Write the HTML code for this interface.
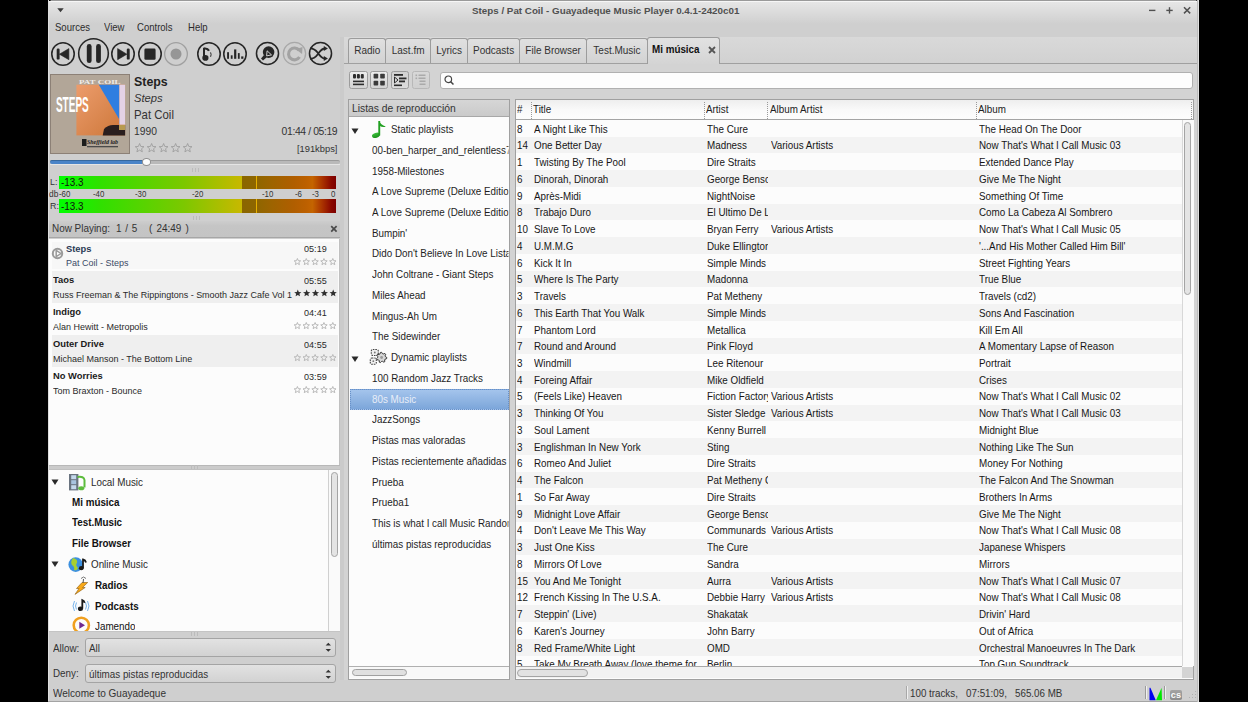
<!DOCTYPE html><html><head><meta charset='utf-8'><style>
html,body{margin:0;padding:0;width:1248px;height:702px;overflow:hidden;background:#000;font-family:"Liberation Sans", sans-serif;}
.t{position:absolute;white-space:nowrap;}
.b{position:absolute;box-sizing:border-box;}
svg{position:absolute;overflow:visible;}

</style></head><body>
<div class='b' style='left:48px;top:0px;width:1151px;height:702px;background:#cfcfcf;'></div>
<div class='b' style='left:48px;top:0px;width:1151px;height:37px;background:linear-gradient(#e8e8e8,#cfcfcf 24px,#cfcfcf);'></div>
<div class='b' style='left:48px;top:0px;width:1151px;height:1px;background:#9a9a9a;'></div>
<div class='b' style='left:49px;top:1px;width:1149px;height:1px;background:#f6f6f6;'></div>
<div class='b' style='left:48px;top:0px;width:3px;height:3px;background:radial-gradient(circle at 100% 100%, transparent 2.2px, #000 2.8px);'></div>
<div class='b' style='left:1196px;top:0px;width:3px;height:3px;background:radial-gradient(circle at 0% 100%, transparent 2.2px, #000 2.8px);'></div>
<div class='b' style='left:48px;top:0px;width:1px;height:702px;background:#dedede;'></div>
<div class='b' style='left:48px;top:701px;width:1151px;height:1px;background:#a4a4a4;'></div>
<div class='b' style='left:1197px;top:0px;width:1px;height:702px;background:#bcbcbc;'></div>
<div class='b' style='left:1198px;top:0px;width:1px;height:702px;background:#e0e0e0;'></div>
<div class='t' style='left:472px;top:4.60px;font-size:9.80px;line-height:12px;color:#505050;font-weight:bold;font-style:normal;'>Steps / Pat Coil - Guayadeque Music Player 0.4.1-2420c01</div>
<svg style='left:56.5px;top:8.3px' width='8' height='6'><path d='M0.3 0.3 L6.7 0.3 L3.5 4.2 Z' fill='#3a3a3a'/></svg>
<svg style='left:1148px;top:5px' width='50' height='12'><rect x='1' y='4.7' width='6.4' height='1.4' fill='#505050'/><rect x='18.3' y='4.7' width='6.4' height='1.4' fill='#505050'/><rect x='20.8' y='2.2' width='1.4' height='6.4' fill='#505050'/><path d='M36 2.2 L42.2 8.4 M42.2 2.2 L36 8.4' stroke='#505050' stroke-width='1.5'/></svg>
<div class='t' style='left:55px;top:22.34px;font-size:9.99px;line-height:12px;color:#2c2c2c;font-weight:normal;font-style:normal;transform:scaleX(0.955);transform-origin:0 0;'>Sources</div>
<div class='t' style='left:103.5px;top:22.34px;font-size:9.99px;line-height:12px;color:#2c2c2c;font-weight:normal;font-style:normal;transform:scaleX(0.955);transform-origin:0 0;'>View</div>
<div class='t' style='left:137px;top:22.34px;font-size:9.99px;line-height:12px;color:#2c2c2c;font-weight:normal;font-style:normal;transform:scaleX(0.955);transform-origin:0 0;'>Controls</div>
<div class='t' style='left:187.5px;top:22.34px;font-size:9.99px;line-height:12px;color:#2c2c2c;font-weight:normal;font-style:normal;transform:scaleX(0.955);transform-origin:0 0;'>Help</div>
<svg style='left:48.1px;top:39.0px' width='30' height='30' viewBox='-15.0 -15.0 30 30'><circle cx='0' cy='0' r='11.225' fill='none' stroke='#262626' stroke-width='1.55'/><rect x='-6.3' y='-5.4' width='2.9' height='11' rx='1.2' fill='#262626'/><path d='M-3.6 0.2 L5.9 -5.4 L5.9 5.7 Z' fill='#262626' stroke='#262626' stroke-width='0.6' stroke-linejoin='round'/></svg>
<svg style='left:74.8px;top:35.4px' width='37' height='37' viewBox='-18.5 -18.5 37 37'><circle cx='0' cy='0' r='14.825' fill='none' stroke='#262626' stroke-width='1.55'/><rect x='-6.7' y='-9.4' width='4.8' height='19' rx='2.4' fill='#262626'/><rect x='2.6' y='-9.4' width='4.8' height='19' rx='2.4' fill='#262626'/></svg>
<svg style='left:108.4px;top:39.0px' width='30' height='30' viewBox='-15.0 -15.0 30 30'><circle cx='0' cy='0' r='11.225' fill='none' stroke='#262626' stroke-width='1.55'/><rect x='3.8' y='-5.4' width='2.9' height='11' rx='1.2' fill='#262626'/><path d='M3.9 0.2 L-5.4 -5.4 L-5.4 5.7 Z' fill='#262626' stroke='#262626' stroke-width='0.6' stroke-linejoin='round'/></svg>
<svg style='left:134.9px;top:38.9px' width='30' height='30' viewBox='-15.0 -15.0 30 30'><circle cx='0' cy='0' r='11.225' fill='none' stroke='#262626' stroke-width='1.55'/><rect x='-5.6' y='-5.4' width='11.2' height='11.2' rx='1.3' fill='#262626'/></svg>
<svg style='left:161.1px;top:38.9px' width='30' height='30' viewBox='-15.0 -15.0 30 30'><circle cx='0' cy='0' r='11.35' fill='none' stroke='#a0a0a0' stroke-width='1.3'/><circle cx='0' cy='0' r='5.5' fill='#969696'/></svg>
<svg style='left:193.9px;top:38.9px' width='30' height='30' viewBox='-15.0 -15.0 30 30'><circle cx='0' cy='0' r='11.225' fill='none' stroke='#262626' stroke-width='1.55'/><ellipse cx='-3.6' cy='3.9' rx='3.1' ry='2.8' fill='#262626'/><rect x='-6' y='-6.2' width='2' height='10' fill='#262626'/><path d='M-5 -5.4 Q-1.5 -6 0 -3.2' stroke='#262626' stroke-width='2.2' fill='none'/><path d='M1.6 -1.6 Q2.6 0.6 1.6 2.8' stroke='#262626' stroke-width='1' fill='none'/></svg>
<svg style='left:220.1px;top:38.9px' width='30' height='30' viewBox='-15.0 -15.0 30 30'><circle cx='0' cy='0' r='11.225' fill='none' stroke='#262626' stroke-width='1.55'/><rect x='-7.9' y='-1.8' width='1.9' height='6.6' fill='#262626'/><rect x='-4.2' y='1.3' width='1.8' height='3.5' fill='#262626'/><rect x='-0.9' y='-4.6' width='2.2' height='9.4' fill='#262626'/><rect x='2.9' y='-0.9' width='1.8' height='5.7' fill='#262626'/><rect x='6.2' y='2.4' width='2.2' height='2.4' fill='#262626'/></svg>
<svg style='left:253.39999999999998px;top:39.4px' width='29' height='29' viewBox='-14.5 -14.5 29 29'><circle cx='0' cy='0' r='11.025' fill='none' stroke='#262626' stroke-width='1.55'/><circle cx='1.1' cy='-1.4' r='5.8' fill='#262626'/><path d='M-3.5 1.5 L-1 4 L-4.5 7 L-6.5 5 Z' fill='#262626'/><path d='M-6.5 6.5 L-7.5 7.5' stroke='#666' stroke-width='1'/><path d='M-0.4 -2.7 L4 1.4 L-0.9 2.4 Z' fill='none' stroke='#e0e0e0' stroke-width='0.9'/></svg>
<svg style='left:279.6px;top:39.4px' width='29' height='29' viewBox='-14.5 -14.5 29 29'><circle cx='0' cy='0' r='11.15' fill='none' stroke='#a8a8a8' stroke-width='1.3'/><path d='M4.6 -3.2 A5.9 5.9 0 1 0 5 3.5' stroke='#a2a2a2' stroke-width='3.1' fill='none'/><path d='M1.2 -4.2 L8 -6.4 L7.6 0.4 Z' fill='#a2a2a2'/></svg>
<svg style='left:305.8px;top:39.4px' width='29' height='29' viewBox='-14.5 -14.5 29 29'><circle cx='0' cy='0' r='11.025' fill='none' stroke='#262626' stroke-width='1.55'/><path d='M-10.5 -5.2 C-5 -5.2 -3.5 -1.5 -2.2 0 C-0.9 1.5 1 5 4.5 5 M-10.5 5.2 C-5 5.2 -3.5 1.5 -2.2 0 C-0.9 -1.5 1 -5 4.5 -5' stroke='#262626' stroke-width='1.85' fill='none'/><path d='M3.3 -7.6 L7.4 -5 L3.3 -2.4 Z M3.3 2.4 L7.4 5 L3.3 7.6 Z' fill='#262626'/></svg>
<svg style='left:50px;top:74px' width='80' height='80' viewBox='0 0 80 80'>
<defs><linearGradient id='og' x1='0' y1='0' x2='1' y2='1'><stop offset='0' stop-color='#ec9c6c'/><stop offset='1' stop-color='#cc7638'/></linearGradient></defs>
<rect x='0' y='0' width='80' height='80' fill='#b2a698'/>
<rect x='0.5' y='0.5' width='79' height='79' fill='none' stroke='#8c8076' stroke-width='1'/>
<rect x='26.4' y='10.7' width='48.7' height='50.7' fill='url(#og)'/>
<path d='M48.8 10.7 L69.4 10.7 L69.4 50 L72 50 Z' fill='#2f7ee0'/>
<rect x='69.4' y='10.7' width='5.7' height='40' fill='#e4d2e6'/>
<path d='M52.7 61.4 L54 55 Q58 51 63 51 L70 51 L75.1 51 L75.1 61.4 Z' fill='#2a1e1e'/>
<rect x='69' y='51' width='6.1' height='5' fill='#b89a50'/>
<text x='0' y='0' font-family='Liberation Sans' font-weight='bold' font-size='16' fill='#fff' transform='translate(5.9,37.8) scale(0.7,1.36)' textLength='47' lengthAdjust='spacingAndGlyphs'>STEPS</text>
<text x='29' y='9.5' font-family='Liberation Serif' font-weight='bold' font-size='5.6' fill='#f0ece8' textLength='41.6' lengthAdjust='spacingAndGlyphs'>PAT COIL</text>
<rect x='32' y='65' width='4.5' height='7' fill='#1c1c1c'/>
<text x='37' y='70' font-family='Liberation Serif' font-style='italic' font-weight='bold' font-size='6' fill='#1c1c1c' textLength='31' lengthAdjust='spacingAndGlyphs'>Sheffield lab</text>
<rect x='37' y='72' width='31' height='1.3' fill='#4a4a4a'/>
</svg>
<div class='t' style='left:133.6px;top:73.70px;font-size:12.98px;line-height:16px;color:#222;font-weight:bold;font-style:normal;transform:scaleX(0.955);transform-origin:0 0;'>Steps</div>
<div class='t' style='left:133.8px;top:91.23px;font-size:11.74px;line-height:14px;color:#333;font-weight:normal;font-style:italic;transform:scaleX(0.955);transform-origin:0 0;'>Steps</div>
<div class='t' style='left:133.6px;top:107.86px;font-size:11.95px;line-height:14px;color:#333;font-weight:normal;font-style:normal;transform:scaleX(0.955);transform-origin:0 0;'>Pat Coil</div>
<div class='t' style='left:133.6px;top:124.75px;font-size:10.81px;line-height:13px;color:#333;font-weight:normal;font-style:normal;transform:scaleX(0.955);transform-origin:0 0;'>1990</div>
<div class='t' style='right:910.5px;top:124.52px;font-size:10.92px;line-height:13px;color:#333;font-weight:normal;font-style:normal;text-align:right;transform:scaleX(0.955);transform-origin:100% 0;letter-spacing:-0.42px;'>01:44 / 05:19</div>
<div class='t' style='right:910.5px;top:142.61px;font-size:9.79px;line-height:12px;color:#333;font-weight:normal;font-style:normal;text-align:right;transform:scaleX(0.955);transform-origin:100% 0;'>[191kbps]</div>
<svg style='left:135.2px;top:143.1px' width='62' height='11.2'><polygon transform='translate(4.60,5.10)' points='0.00,-4.60 1.22,-1.67 4.37,-1.42 1.97,0.64 2.70,3.72 0.00,2.07 -2.70,3.72 -1.97,0.64 -4.37,-1.42 -1.22,-1.67' fill='none' stroke='#9c9c9c' stroke-width='0.85' stroke-linejoin='round'/><polygon transform='translate(16.60,5.10)' points='0.00,-4.60 1.22,-1.67 4.37,-1.42 1.97,0.64 2.70,3.72 0.00,2.07 -2.70,3.72 -1.97,0.64 -4.37,-1.42 -1.22,-1.67' fill='none' stroke='#9c9c9c' stroke-width='0.85' stroke-linejoin='round'/><polygon transform='translate(28.60,5.10)' points='0.00,-4.60 1.22,-1.67 4.37,-1.42 1.97,0.64 2.70,3.72 0.00,2.07 -2.70,3.72 -1.97,0.64 -4.37,-1.42 -1.22,-1.67' fill='none' stroke='#9c9c9c' stroke-width='0.85' stroke-linejoin='round'/><polygon transform='translate(40.60,5.10)' points='0.00,-4.60 1.22,-1.67 4.37,-1.42 1.97,0.64 2.70,3.72 0.00,2.07 -2.70,3.72 -1.97,0.64 -4.37,-1.42 -1.22,-1.67' fill='none' stroke='#9c9c9c' stroke-width='0.85' stroke-linejoin='round'/><polygon transform='translate(52.60,5.10)' points='0.00,-4.60 1.22,-1.67 4.37,-1.42 1.97,0.64 2.70,3.72 0.00,2.07 -2.70,3.72 -1.97,0.64 -4.37,-1.42 -1.22,-1.67' fill='none' stroke='#9c9c9c' stroke-width='0.85' stroke-linejoin='round'/></svg>
<div class='b' style='left:50px;top:160px;width:290px;height:3.8px;background:#b9b9b9;border-radius:2px;border-top:1px solid #9a9a9a;'></div>
<div class='b' style='left:50px;top:163.8px;width:290px;height:1px;background:#e4e4e4;'></div>
<div class='b' style='left:50px;top:160px;width:96px;height:3.8px;background:#4a84c8;border-radius:2px;border-top:1px solid #36689e;'></div>
<div class='b' style='left:141.6px;top:157.6px;width:9.8px;height:8.2px;background:#fcfcfc;border-radius:50%;border:1px solid #8e8e8e;'></div>
<svg style='left:190.5px;top:167.8px' width='10' height='4'><rect x='1' y='0' width='1' height='4' fill='#bcbcbc'/><rect x='4' y='0' width='1' height='4' fill='#bcbcbc'/><rect x='7' y='0' width='1' height='4' fill='#bcbcbc'/></svg>
<svg style='left:191.5px;top:216px' width='10' height='4'><rect x='1' y='0' width='1' height='4' fill='#bcbcbc'/><rect x='4' y='0' width='1' height='4' fill='#bcbcbc'/><rect x='7' y='0' width='1' height='4' fill='#bcbcbc'/></svg>
<div class='b' style='left:58.8px;top:175.8px;width:277.2px;height:13.1px;background:linear-gradient(90deg,#00ff00 0%,#30e000 15%,#7cc800 45%,#c8b800 66%,#d0a000 72%,#c07000 85%,#c86000 92%,#901000 97%,#700000 100%);'></div>
<div class='b' style='left:241.5px;top:175.8px;width:94.5px;height:13.1px;background:linear-gradient(90deg,#8a6600 0%,#8e6600 15%,#9c6400 30%,#b05e00 55%,#bc6000 68%,#c46400 75%,#a83000 86%,#8a0800 95%,#7c0000 100%);'></div>
<div class='b' style='left:256.4px;top:175.8px;width:1.1px;height:13.1px;background:#e6b000;'></div>
<div class='t' style='left:50.3px;top:177.39px;font-size:9.27px;line-height:11px;color:#333;font-weight:normal;font-style:normal;transform:scaleX(0.955);transform-origin:0 0;'>L:</div>
<div class='t' style='left:60.5px;top:177.13px;font-size:10.30px;line-height:12px;color:#111;font-weight:normal;font-style:normal;transform:scaleX(0.955);transform-origin:0 0;'>-13.3</div>
<div class='b' style='left:58.8px;top:199.2px;width:277.2px;height:13.5px;background:linear-gradient(90deg,#00ff00 0%,#30e000 15%,#7cc800 45%,#c8b800 66%,#d0a000 72%,#c07000 85%,#c86000 92%,#901000 97%,#700000 100%);'></div>
<div class='b' style='left:241.5px;top:199.2px;width:94.5px;height:13.5px;background:linear-gradient(90deg,#8a6600 0%,#8e6600 15%,#9c6400 30%,#b05e00 55%,#bc6000 68%,#c46400 75%,#a83000 86%,#8a0800 95%,#7c0000 100%);'></div>
<div class='b' style='left:256.4px;top:199.2px;width:1.1px;height:13.5px;background:#e6b000;'></div>
<div class='t' style='left:50.3px;top:200.79px;font-size:9.27px;line-height:11px;color:#333;font-weight:normal;font-style:normal;transform:scaleX(0.955);transform-origin:0 0;'>R:</div>
<div class='t' style='left:60.5px;top:200.53px;font-size:10.30px;line-height:12px;color:#111;font-weight:normal;font-style:normal;transform:scaleX(0.955);transform-origin:0 0;'>-13.3</div>
<div class='t' style='left:48.8px;top:189.27px;font-size:8.76px;line-height:11px;color:#333;font-weight:normal;font-style:normal;transform:scaleX(0.955);transform-origin:0 0;'>db</div>
<div class='t' style='left:59.2px;top:190.14px;font-size:8.24px;line-height:10px;color:#333;font-weight:normal;font-style:normal;transform:scaleX(0.955);transform-origin:0 0;'>-60</div>
<div class='t' style='left:92.5px;top:190.14px;font-size:8.24px;line-height:10px;color:#333;font-weight:normal;font-style:normal;transform:scaleX(0.955);transform-origin:0 0;'>-40</div>
<div class='t' style='left:134.5px;top:190.14px;font-size:8.24px;line-height:10px;color:#333;font-weight:normal;font-style:normal;transform:scaleX(0.955);transform-origin:0 0;'>-30</div>
<div class='t' style='left:192px;top:190.14px;font-size:8.24px;line-height:10px;color:#333;font-weight:normal;font-style:normal;transform:scaleX(0.955);transform-origin:0 0;'>-20</div>
<div class='t' style='left:262px;top:190.14px;font-size:8.24px;line-height:10px;color:#333;font-weight:normal;font-style:normal;transform:scaleX(0.955);transform-origin:0 0;'>-10</div>
<div class='t' style='left:295px;top:190.14px;font-size:8.24px;line-height:10px;color:#333;font-weight:normal;font-style:normal;transform:scaleX(0.955);transform-origin:0 0;'>-6</div>
<div class='t' style='left:312.4px;top:190.14px;font-size:8.24px;line-height:10px;color:#333;font-weight:normal;font-style:normal;transform:scaleX(0.955);transform-origin:0 0;'>-3</div>
<div class='t' style='left:331px;top:190.14px;font-size:8.24px;line-height:10px;color:#333;font-weight:normal;font-style:normal;transform:scaleX(0.955);transform-origin:0 0;'>0</div>
<div class='b' style='left:48.5px;top:221px;width:291.5px;height:17.2px;background:linear-gradient(#cdcdcd,#c5c5c5 30%,#c4c4c4);border-bottom:1.4px solid #a6a6a6;'></div>
<div class='t' style='left:51.8px;top:222.70px;font-size:10.40px;line-height:12px;color:#333;font-weight:normal;font-style:normal;transform:scaleX(0.955);transform-origin:0 0;'>Now Playing:</div>
<div class='t' style='left:115.6px;top:222.70px;font-size:10.40px;line-height:12px;color:#333;font-weight:normal;font-style:normal;transform:scaleX(0.955);transform-origin:0 0;word-spacing:1px;'>1 / 5</div>
<div class='t' style='left:149px;top:222.70px;font-size:10.40px;line-height:12px;color:#333;font-weight:normal;font-style:normal;transform:scaleX(0.955);transform-origin:0 0;word-spacing:1.5px;'>( 24:49 )</div>
<svg style='left:329.5px;top:225px' width='8' height='8'><path d='M1.2 1.2 L6.6 6.6 M6.6 1.2 L1.2 6.6' stroke='#4a4a4a' stroke-width='1.7'/></svg>
<div class='b' style='left:49px;top:238.5px;width:291px;height:226px;background:#fcfcfc;border-right:1px solid #c0c0c0;'></div>
<div class='b' style='left:51.5px;top:241.5px;width:286.8px;height:27px;background:#f7f7f7;'></div>
<div class='t' style='left:65.6px;top:243.01px;font-size:9.79px;line-height:12px;color:#2a3a55;font-weight:bold;font-style:normal;transform:scaleX(0.955);transform-origin:0 0;'>Steps</div>
<div class='t' style='left:65.6px;top:257.23px;font-size:9.42px;line-height:11px;color:#3a4a66;font-weight:normal;font-style:normal;transform:scaleX(0.955);transform-origin:0 0;'>Pat Coil - Steps</div>
<div class='t' style='right:921.6px;top:242.72px;font-size:9.48px;line-height:11px;color:#2a2a2a;font-weight:normal;font-style:normal;text-align:right;transform:scaleX(0.955);transform-origin:100% 0;'>05:19</div>
<svg style='left:294.2px;top:257.6px' width='46.25' height='8.8'><polygon transform='translate(3.40,3.90)' points='0.00,-3.40 0.90,-1.24 3.23,-1.05 1.46,0.47 2.00,2.75 0.00,1.53 -2.00,2.75 -1.46,0.47 -3.23,-1.05 -0.90,-1.24' fill='none' stroke='#b0b0b0' stroke-width='0.85' stroke-linejoin='round'/><polygon transform='translate(12.25,3.90)' points='0.00,-3.40 0.90,-1.24 3.23,-1.05 1.46,0.47 2.00,2.75 0.00,1.53 -2.00,2.75 -1.46,0.47 -3.23,-1.05 -0.90,-1.24' fill='none' stroke='#b0b0b0' stroke-width='0.85' stroke-linejoin='round'/><polygon transform='translate(21.10,3.90)' points='0.00,-3.40 0.90,-1.24 3.23,-1.05 1.46,0.47 2.00,2.75 0.00,1.53 -2.00,2.75 -1.46,0.47 -3.23,-1.05 -0.90,-1.24' fill='none' stroke='#b0b0b0' stroke-width='0.85' stroke-linejoin='round'/><polygon transform='translate(29.95,3.90)' points='0.00,-3.40 0.90,-1.24 3.23,-1.05 1.46,0.47 2.00,2.75 0.00,1.53 -2.00,2.75 -1.46,0.47 -3.23,-1.05 -0.90,-1.24' fill='none' stroke='#b0b0b0' stroke-width='0.85' stroke-linejoin='round'/><polygon transform='translate(38.80,3.90)' points='0.00,-3.40 0.90,-1.24 3.23,-1.05 1.46,0.47 2.00,2.75 0.00,1.53 -2.00,2.75 -1.46,0.47 -3.23,-1.05 -0.90,-1.24' fill='none' stroke='#b0b0b0' stroke-width='0.85' stroke-linejoin='round'/></svg>
<svg style='left:52px;top:247.5px' width='12' height='12'><circle cx='5.5' cy='5.5' r='4.7' fill='none' stroke='#9a9a9a' stroke-width='2'/><path d='M4.2 2.3 L9 5.5 L4.2 8.7 Z' fill='#fafafa' stroke='#9a9a9a' stroke-width='1.5' stroke-linejoin='round'/></svg>
<div class='b' style='left:51.5px;top:271px;width:286.8px;height:32px;background:#efefef;'></div>
<div class='t' style='left:52.8px;top:274.11px;font-size:9.79px;line-height:12px;color:#1a1a1a;font-weight:bold;font-style:normal;transform:scaleX(0.955);transform-origin:0 0;'>Taos</div>
<div class='t' style='left:52.8px;top:289.23px;font-size:9.42px;line-height:11px;color:#2a2a2a;font-weight:normal;font-style:normal;transform:scaleX(0.955);transform-origin:0 0;'>Russ Freeman &amp; The Rippingtons - Smooth Jazz Cafe Vol 1</div>
<div class='t' style='right:921.6px;top:274.72px;font-size:9.48px;line-height:11px;color:#2a2a2a;font-weight:normal;font-style:normal;text-align:right;transform:scaleX(0.955);transform-origin:100% 0;'>05:55</div>
<svg style='left:293.8px;top:289.2px' width='46.25' height='9.6'><polygon transform='translate(3.80,4.30)' points='0.00,-3.80 1.01,-1.38 3.61,-1.17 1.63,0.53 2.23,3.07 0.00,1.71 -2.23,3.07 -1.63,0.53 -3.61,-1.17 -1.01,-1.38' fill='#303030'/><polygon transform='translate(12.65,4.30)' points='0.00,-3.80 1.01,-1.38 3.61,-1.17 1.63,0.53 2.23,3.07 0.00,1.71 -2.23,3.07 -1.63,0.53 -3.61,-1.17 -1.01,-1.38' fill='#303030'/><polygon transform='translate(21.50,4.30)' points='0.00,-3.80 1.01,-1.38 3.61,-1.17 1.63,0.53 2.23,3.07 0.00,1.71 -2.23,3.07 -1.63,0.53 -3.61,-1.17 -1.01,-1.38' fill='#303030'/><polygon transform='translate(30.35,4.30)' points='0.00,-3.80 1.01,-1.38 3.61,-1.17 1.63,0.53 2.23,3.07 0.00,1.71 -2.23,3.07 -1.63,0.53 -3.61,-1.17 -1.01,-1.38' fill='#303030'/><polygon transform='translate(39.20,4.30)' points='0.00,-3.80 1.01,-1.38 3.61,-1.17 1.63,0.53 2.23,3.07 0.00,1.71 -2.23,3.07 -1.63,0.53 -3.61,-1.17 -1.01,-1.38' fill='#303030'/></svg>
<div class='t' style='left:52.8px;top:306.11px;font-size:9.79px;line-height:12px;color:#1a1a1a;font-weight:bold;font-style:normal;transform:scaleX(0.955);transform-origin:0 0;'>Indigo</div>
<div class='t' style='left:52.8px;top:321.23px;font-size:9.42px;line-height:11px;color:#2a2a2a;font-weight:normal;font-style:normal;transform:scaleX(0.955);transform-origin:0 0;'>Alan Hewitt - Metropolis</div>
<div class='t' style='right:921.6px;top:306.72px;font-size:9.48px;line-height:11px;color:#2a2a2a;font-weight:normal;font-style:normal;text-align:right;transform:scaleX(0.955);transform-origin:100% 0;'>04:41</div>
<svg style='left:294.2px;top:321.6px' width='46.25' height='8.8'><polygon transform='translate(3.40,3.90)' points='0.00,-3.40 0.90,-1.24 3.23,-1.05 1.46,0.47 2.00,2.75 0.00,1.53 -2.00,2.75 -1.46,0.47 -3.23,-1.05 -0.90,-1.24' fill='none' stroke='#b0b0b0' stroke-width='0.85' stroke-linejoin='round'/><polygon transform='translate(12.25,3.90)' points='0.00,-3.40 0.90,-1.24 3.23,-1.05 1.46,0.47 2.00,2.75 0.00,1.53 -2.00,2.75 -1.46,0.47 -3.23,-1.05 -0.90,-1.24' fill='none' stroke='#b0b0b0' stroke-width='0.85' stroke-linejoin='round'/><polygon transform='translate(21.10,3.90)' points='0.00,-3.40 0.90,-1.24 3.23,-1.05 1.46,0.47 2.00,2.75 0.00,1.53 -2.00,2.75 -1.46,0.47 -3.23,-1.05 -0.90,-1.24' fill='none' stroke='#b0b0b0' stroke-width='0.85' stroke-linejoin='round'/><polygon transform='translate(29.95,3.90)' points='0.00,-3.40 0.90,-1.24 3.23,-1.05 1.46,0.47 2.00,2.75 0.00,1.53 -2.00,2.75 -1.46,0.47 -3.23,-1.05 -0.90,-1.24' fill='none' stroke='#b0b0b0' stroke-width='0.85' stroke-linejoin='round'/><polygon transform='translate(38.80,3.90)' points='0.00,-3.40 0.90,-1.24 3.23,-1.05 1.46,0.47 2.00,2.75 0.00,1.53 -2.00,2.75 -1.46,0.47 -3.23,-1.05 -0.90,-1.24' fill='none' stroke='#b0b0b0' stroke-width='0.85' stroke-linejoin='round'/></svg>
<div class='b' style='left:51.5px;top:335px;width:286.8px;height:32px;background:#efefef;'></div>
<div class='t' style='left:52.8px;top:338.11px;font-size:9.79px;line-height:12px;color:#1a1a1a;font-weight:bold;font-style:normal;transform:scaleX(0.955);transform-origin:0 0;'>Outer Drive</div>
<div class='t' style='left:52.8px;top:353.23px;font-size:9.42px;line-height:11px;color:#2a2a2a;font-weight:normal;font-style:normal;transform:scaleX(0.955);transform-origin:0 0;'>Michael Manson - The Bottom Line</div>
<div class='t' style='right:921.6px;top:338.72px;font-size:9.48px;line-height:11px;color:#2a2a2a;font-weight:normal;font-style:normal;text-align:right;transform:scaleX(0.955);transform-origin:100% 0;'>04:55</div>
<svg style='left:294.2px;top:353.6px' width='46.25' height='8.8'><polygon transform='translate(3.40,3.90)' points='0.00,-3.40 0.90,-1.24 3.23,-1.05 1.46,0.47 2.00,2.75 0.00,1.53 -2.00,2.75 -1.46,0.47 -3.23,-1.05 -0.90,-1.24' fill='none' stroke='#b0b0b0' stroke-width='0.85' stroke-linejoin='round'/><polygon transform='translate(12.25,3.90)' points='0.00,-3.40 0.90,-1.24 3.23,-1.05 1.46,0.47 2.00,2.75 0.00,1.53 -2.00,2.75 -1.46,0.47 -3.23,-1.05 -0.90,-1.24' fill='none' stroke='#b0b0b0' stroke-width='0.85' stroke-linejoin='round'/><polygon transform='translate(21.10,3.90)' points='0.00,-3.40 0.90,-1.24 3.23,-1.05 1.46,0.47 2.00,2.75 0.00,1.53 -2.00,2.75 -1.46,0.47 -3.23,-1.05 -0.90,-1.24' fill='none' stroke='#b0b0b0' stroke-width='0.85' stroke-linejoin='round'/><polygon transform='translate(29.95,3.90)' points='0.00,-3.40 0.90,-1.24 3.23,-1.05 1.46,0.47 2.00,2.75 0.00,1.53 -2.00,2.75 -1.46,0.47 -3.23,-1.05 -0.90,-1.24' fill='none' stroke='#b0b0b0' stroke-width='0.85' stroke-linejoin='round'/><polygon transform='translate(38.80,3.90)' points='0.00,-3.40 0.90,-1.24 3.23,-1.05 1.46,0.47 2.00,2.75 0.00,1.53 -2.00,2.75 -1.46,0.47 -3.23,-1.05 -0.90,-1.24' fill='none' stroke='#b0b0b0' stroke-width='0.85' stroke-linejoin='round'/></svg>
<div class='t' style='left:52.8px;top:370.11px;font-size:9.79px;line-height:12px;color:#1a1a1a;font-weight:bold;font-style:normal;transform:scaleX(0.955);transform-origin:0 0;'>No Worries</div>
<div class='t' style='left:52.8px;top:385.23px;font-size:9.42px;line-height:11px;color:#2a2a2a;font-weight:normal;font-style:normal;transform:scaleX(0.955);transform-origin:0 0;'>Tom Braxton - Bounce</div>
<div class='t' style='right:921.6px;top:370.72px;font-size:9.48px;line-height:11px;color:#2a2a2a;font-weight:normal;font-style:normal;text-align:right;transform:scaleX(0.955);transform-origin:100% 0;'>03:59</div>
<svg style='left:294.2px;top:385.6px' width='46.25' height='8.8'><polygon transform='translate(3.40,3.90)' points='0.00,-3.40 0.90,-1.24 3.23,-1.05 1.46,0.47 2.00,2.75 0.00,1.53 -2.00,2.75 -1.46,0.47 -3.23,-1.05 -0.90,-1.24' fill='none' stroke='#b0b0b0' stroke-width='0.85' stroke-linejoin='round'/><polygon transform='translate(12.25,3.90)' points='0.00,-3.40 0.90,-1.24 3.23,-1.05 1.46,0.47 2.00,2.75 0.00,1.53 -2.00,2.75 -1.46,0.47 -3.23,-1.05 -0.90,-1.24' fill='none' stroke='#b0b0b0' stroke-width='0.85' stroke-linejoin='round'/><polygon transform='translate(21.10,3.90)' points='0.00,-3.40 0.90,-1.24 3.23,-1.05 1.46,0.47 2.00,2.75 0.00,1.53 -2.00,2.75 -1.46,0.47 -3.23,-1.05 -0.90,-1.24' fill='none' stroke='#b0b0b0' stroke-width='0.85' stroke-linejoin='round'/><polygon transform='translate(29.95,3.90)' points='0.00,-3.40 0.90,-1.24 3.23,-1.05 1.46,0.47 2.00,2.75 0.00,1.53 -2.00,2.75 -1.46,0.47 -3.23,-1.05 -0.90,-1.24' fill='none' stroke='#b0b0b0' stroke-width='0.85' stroke-linejoin='round'/><polygon transform='translate(38.80,3.90)' points='0.00,-3.40 0.90,-1.24 3.23,-1.05 1.46,0.47 2.00,2.75 0.00,1.53 -2.00,2.75 -1.46,0.47 -3.23,-1.05 -0.90,-1.24' fill='none' stroke='#b0b0b0' stroke-width='0.85' stroke-linejoin='round'/></svg>
<div class='b' style='left:48.5px;top:464.5px;width:292px;height:5px;background:#cbcbcb;border-top:1px solid #b8b8b8;border-bottom:1px solid #c0c0c0;'></div>
<svg style='left:190px;top:465px' width='10' height='4'><rect x='1' y='0' width='1' height='4' fill='#bcbcbc'/><rect x='4' y='0' width='1' height='4' fill='#bcbcbc'/><rect x='7' y='0' width='1' height='4' fill='#bcbcbc'/></svg>
<div class='b' style='left:49px;top:469.5px;width:291px;height:162px;background:#fcfcfc;border-right:1px solid #c0c0c0;'></div>
<div class='b' style='left:328.2px;top:469.5px;width:11.6px;height:161.5px;background:#fafafa;border-left:1px solid #d0d0d0;'></div>
<div class='b' style='left:331.2px;top:472px;width:7px;height:85px;background:#e4e4e4;border:1px solid #a4a4a4;border-radius:3.5px;'></div>
<svg style='left:50.5px;top:478.5px' width='9' height='7'><path d='M0.5 0.5 L7.5 0.5 L4 6 Z' fill='#2a2a2a'/></svg>
<svg style='left:68px;top:473px' width='20' height='19'>
<rect x='1' y='1' width='9.4' height='16.4' fill='#6a7480'/>
<rect x='3.2' y='2.2' width='5' height='4' fill='#c4d8ec'/><rect x='3.2' y='7.2' width='5' height='4' fill='#a8c4e0'/><rect x='3.2' y='12.2' width='5' height='4' fill='#c4d8ec'/>
<path d='M9.5 4 Q16 3 16.5 7 L16.5 14.5' stroke='#5cbc3c' stroke-width='2' fill='none'/><ellipse cx='13.3' cy='15.3' rx='3' ry='2' fill='#5cbc3c'/></svg>
<div class='t' style='left:90.9px;top:476.83px;font-size:10.30px;line-height:12px;color:#2a2a2a;font-weight:normal;font-style:normal;transform:scaleX(0.955);transform-origin:0 0;'>Local Music</div>
<div class='t' style='left:72.3px;top:496.73px;font-size:10.30px;line-height:12px;color:#111;font-weight:bold;font-style:normal;transform:scaleX(0.955);transform-origin:0 0;'>Mi música</div>
<div class='t' style='left:72.3px;top:517.45px;font-size:10.30px;line-height:12px;color:#111;font-weight:bold;font-style:normal;transform:scaleX(0.955);transform-origin:0 0;'>Test.Music</div>
<div class='t' style='left:72.3px;top:538.17px;font-size:10.30px;line-height:12px;color:#111;font-weight:bold;font-style:normal;transform:scaleX(0.955);transform-origin:0 0;'>File Browser</div>
<svg style='left:50.5px;top:561.4px' width='9' height='7'><path d='M0.5 0.5 L7.5 0.5 L4 6 Z' fill='#2a2a2a'/></svg>
<svg style='left:68px;top:556px' width='20' height='18'>
<circle cx='7.7' cy='8.6' r='7.3' fill='#3c90e0'/><path d='M5 2 Q10 3 9 7 Q7 9 10 12 Q9 15 6 14 Q7 11 4 9 Q2 6 5 2 Z' fill='#a8d030'/>
<ellipse cx='13.3' cy='12.2' rx='2.4' ry='2.1' fill='#1a1a1a'/><path d='M15 12 L15 3.5 Q17.5 4 18 6.5' stroke='#1a1a1a' stroke-width='1.8' fill='none'/></svg>
<div class='t' style='left:90.9px;top:559.43px;font-size:10.30px;line-height:12px;color:#2a2a2a;font-weight:normal;font-style:normal;transform:scaleX(0.955);transform-origin:0 0;'>Online Music</div>
<svg style='left:73px;top:575px' width='18' height='21'>
<path d='M9 7.5 L14.7 7.5 L9.5 12.5 L12.2 12.5 L2 19.4 L6 13.5 L3.5 13.5 Z' fill='#f8a818' stroke='#8a5a10' stroke-width='0.6'/>
<path d='M10 8 L10.5 4' stroke='#555' stroke-width='1'/><path d='M8 3.5 Q10.5 0.5 13 3.5' stroke='#777' stroke-width='1' fill='none'/></svg>
<div class='t' style='left:94.6px;top:580.23px;font-size:10.30px;line-height:12px;color:#111;font-weight:bold;font-style:normal;transform:scaleX(0.955);transform-origin:0 0;'>Radios</div>
<svg style='left:71px;top:598px' width='21' height='16'>
<path d='M3.5 3 Q0.5 8 3.5 13 M5.5 4.5 Q3.5 8 5.5 11.5 M16.5 3 Q19.5 8 16.5 13 M14.5 4.5 Q16.5 8 14.5 11.5' stroke='#78b4ec' stroke-width='1' fill='none'/>
<ellipse cx='9.5' cy='10.8' rx='2.6' ry='2.3' fill='#1a1a1a'/><path d='M11.3 10.5 L11.3 2 Q13.3 2.5 13.6 4.8' stroke='#1a1a1a' stroke-width='1.8' fill='none'/></svg>
<div class='t' style='left:94.6px;top:601.23px;font-size:10.30px;line-height:12px;color:#111;font-weight:bold;font-style:normal;transform:scaleX(0.955);transform-origin:0 0;'>Podcasts</div>
<svg style='left:71px;top:616px' width='21' height='16'>
<circle cx='10.3' cy='9.3' r='7.6' fill='none' stroke='#f0a020' stroke-width='2.6'/><path d='M8.3 5.8 L14 9.3 L8.3 12.8 Z' fill='#702890'/></svg>
<div class='t' style='left:94.6px;top:620.93px;font-size:10.30px;line-height:12px;color:#111;font-weight:normal;font-style:normal;transform:scaleX(0.955);transform-origin:0 0;height:13px;overflow:hidden;'>Jamendo</div>
<div class='b' style='left:48.5px;top:631px;width:292px;height:70px;background:#cfcfcf;border-top:1px solid #c4c4c4;'></div>
<svg style='left:190px;top:632px' width='10' height='4'><rect x='1' y='0' width='1' height='4' fill='#bcbcbc'/><rect x='4' y='0' width='1' height='4' fill='#bcbcbc'/><rect x='7' y='0' width='1' height='4' fill='#bcbcbc'/></svg>
<div class='t' style='left:52.9px;top:643.43px;font-size:10.30px;line-height:12px;color:#333;font-weight:normal;font-style:normal;transform:scaleX(0.955);transform-origin:0 0;'>Allow:</div>
<div class='t' style='left:52.9px;top:667.93px;font-size:10.30px;line-height:12px;color:#333;font-weight:normal;font-style:normal;transform:scaleX(0.955);transform-origin:0 0;'>Deny:</div>
<div class='b' style='left:84.7px;top:637.8px;width:251px;height:19.5px;background:linear-gradient(#e2e2e2,#d2d2d2);border:1px solid #a4a4a4;border-radius:3px;'></div>
<div class='t' style='left:88.6px;top:642.53px;font-size:10.30px;line-height:12px;color:#333;font-weight:normal;font-style:normal;transform:scaleX(0.955);transform-origin:0 0;'>All</div>
<svg style='left:324.5px;top:642.3px' width='7' height='11'><path d='M0.6 3.6 L3.3 0.8 L6 3.6 Z M0.6 7 L3.3 9.8 L6 7 Z' fill='#333'/></svg>
<div class='b' style='left:84.7px;top:664.2px;width:251px;height:18.4px;background:linear-gradient(#e2e2e2,#d2d2d2);border:1px solid #a4a4a4;border-radius:3px;'></div>
<div class='t' style='left:88.6px;top:668.93px;font-size:10.30px;line-height:12px;color:#333;font-weight:normal;font-style:normal;transform:scaleX(0.955);transform-origin:0 0;'>últimas pistas reproducidas</div>
<svg style='left:324.5px;top:668.7px' width='7' height='11'><path d='M0.6 3.6 L3.3 0.8 L6 3.6 Z M0.6 7 L3.3 9.8 L6 7 Z' fill='#333'/></svg>
<div class='t' style='left:52.6px;top:687.16px;font-size:10.51px;line-height:13px;color:#333;font-weight:normal;font-style:normal;transform:scaleX(0.955);transform-origin:0 0;'>Welcome to Guayadeque</div>
<div class='b' style='left:340px;top:37px;width:3.7px;height:643px;background:#cbcbcb;'></div>
<div class='b' style='left:343.7px;top:37px;width:853.3px;height:643px;background:#d3d3d3;'></div>
<div class='b' style='left:343.7px;top:37px;width:853.3px;height:26.5px;background:linear-gradient(#d9d9d9,#d1d1d1);'></div>
<div class='b' style='left:348.3px;top:38.3px;width:38.0px;height:25.5px;background:linear-gradient(#e0e0e0,#d2d2d2);border:1px solid #9c9c9c;border-bottom:none;border-radius:3px 3px 0 0;'></div>
<div class='t' style='left:348.8px;top:45.135000000000005px;width:37.0px;text-align:center;font-size:10px;line-height:12px;color:#333;'>Radio</div>
<div class='b' style='left:385.3px;top:38.3px;width:45.69999999999999px;height:25.5px;background:linear-gradient(#e0e0e0,#d2d2d2);border:1px solid #9c9c9c;border-bottom:none;border-radius:3px 3px 0 0;'></div>
<div class='t' style='left:385.8px;top:45.135000000000005px;width:44.69999999999999px;text-align:center;font-size:10px;line-height:12px;color:#333;'>Last.fm</div>
<div class='b' style='left:430px;top:38.3px;width:38.19999999999999px;height:25.5px;background:linear-gradient(#e0e0e0,#d2d2d2);border:1px solid #9c9c9c;border-bottom:none;border-radius:3px 3px 0 0;'></div>
<div class='t' style='left:430.5px;top:45.135000000000005px;width:37.19999999999999px;text-align:center;font-size:10px;line-height:12px;color:#333;'>Lyrics</div>
<div class='b' style='left:467.2px;top:38.3px;width:52.80000000000001px;height:25.5px;background:linear-gradient(#e0e0e0,#d2d2d2);border:1px solid #9c9c9c;border-bottom:none;border-radius:3px 3px 0 0;'></div>
<div class='t' style='left:467.7px;top:45.135000000000005px;width:51.80000000000001px;text-align:center;font-size:10px;line-height:12px;color:#333;'>Podcasts</div>
<div class='b' style='left:519px;top:38.3px;width:68.29999999999995px;height:25.5px;background:linear-gradient(#e0e0e0,#d2d2d2);border:1px solid #9c9c9c;border-bottom:none;border-radius:3px 3px 0 0;'></div>
<div class='t' style='left:519.5px;top:45.135000000000005px;width:67.29999999999995px;text-align:center;font-size:10px;line-height:12px;color:#333;'>File Browser</div>
<div class='b' style='left:586.3px;top:38.3px;width:61.30000000000007px;height:25.5px;background:linear-gradient(#e0e0e0,#d2d2d2);border:1px solid #9c9c9c;border-bottom:none;border-radius:3px 3px 0 0;'></div>
<div class='t' style='left:586.8px;top:45.135000000000005px;width:60.30000000000007px;text-align:center;font-size:10px;line-height:12px;color:#333;'>Test.Music</div>
<div class='b' style='left:343.7px;top:63px;width:853.3px;height:1px;background:#a0a0a0;'></div>
<div class='b' style='left:646.6px;top:36.9px;width:73px;height:27.2px;background:linear-gradient(#e2e2e2,#d4d4d4);border:1px solid #9c9c9c;border-bottom:none;border-radius:3px 3px 0 0;'></div>
<div class='t' style='left:652.4px;top:44.23px;font-size:10.30px;line-height:12px;color:#111;font-weight:bold;font-style:normal;transform:scaleX(0.955);transform-origin:0 0;'>Mi música</div>
<svg style='left:708px;top:46px' width='8' height='8'><path d='M1 1 L7 7 M7 1 L1 7' stroke='#555' stroke-width='1.8'/></svg>
<div class='b' style='left:349.3px;top:70.9px;width:18.30000000000001px;height:18.5px;background:linear-gradient(#ececec,#d2d2d2);border:1px solid #9c9c9c;border-radius:2.5px;'></div>
<svg style='left:349.3px;top:71px' width='18.30000000000001' height='18'><rect x='4' y='3' width='3' height='4.5' rx='1' fill='#2c2c2c'/><rect x='7.9' y='3' width='3' height='4.5' rx='1' fill='#2c2c2c'/><rect x='11.8' y='3' width='3' height='4.5' rx='1' fill='#2c2c2c'/><rect x='4' y='9.6' width='11' height='1.6' fill='#2c2c2c'/><rect x='4' y='12.6' width='11' height='1.6' fill='#2c2c2c'/></svg>
<div class='b' style='left:370.2px;top:70.9px;width:18.19999999999999px;height:18.5px;background:linear-gradient(#ececec,#d2d2d2);border:1px solid #9c9c9c;border-radius:2.5px;'></div>
<svg style='left:370.2px;top:71px' width='18.19999999999999' height='18'><rect x='3.6' y='2.8' width='4.6' height='4.8' rx='0.8' fill='#3a3a3a'/><rect x='10.2' y='2.8' width='4.6' height='4.8' rx='0.8' fill='#3a3a3a'/><rect x='3.6' y='9.8' width='4.6' height='4.8' rx='0.8' fill='#3a3a3a'/><rect x='10.2' y='9.8' width='4.6' height='4.8' rx='0.8' fill='#3a3a3a'/></svg>
<div class='b' style='left:390.8px;top:70.9px;width:18.599999999999966px;height:18.5px;background:linear-gradient(#d2d2d2,#dcdcdc);border:1px solid #9c9c9c;border-radius:2.5px;'></div>
<svg style='left:390.8px;top:71px' width='18.599999999999966' height='18'><rect x='3' y='3' width='9' height='1.8' fill='#2c2c2c'/><path d='M3.5 6 L7 9 L3.5 12 Z' fill='none' stroke='#2c2c2c' stroke-width='1'/><rect x='8' y='6.5' width='7.5' height='1.8' fill='#2c2c2c'/><rect x='8' y='9.5' width='6' height='1.8' fill='#2c2c2c'/><rect x='3' y='13.5' width='8' height='1.6' fill='#2c2c2c'/></svg>
<div class='b' style='left:411.5px;top:70.9px;width:18.399999999999977px;height:18.5px;background:linear-gradient(#d8d8d8,#d0d0d0);border:1px solid #b8b8b8;border-radius:2.5px;'></div>
<svg style='left:411.5px;top:71px' width='18.399999999999977' height='18'><rect x='3.5' y='3.5' width='1.6' height='1.6' fill='#aaa'/><rect x='6.5' y='3.5' width='7' height='1.5' fill='#aaa'/><rect x='3.5' y='6.5' width='1.6' height='1.6' fill='#aaa'/><rect x='6.5' y='6.5' width='7' height='1.5' fill='#aaa'/><rect x='7.5' y='9.5' width='6' height='1.5' fill='#aaa'/><rect x='7.5' y='12.5' width='6' height='1.5' fill='#aaa'/></svg>
<div class='b' style='left:440.4px;top:72.2px;width:752.6px;height:16.5px;background:#fdfdfd;border:1px solid #b0b0b0;border-radius:3px;'></div>
<svg style='left:444px;top:74.5px' width='11' height='11'><circle cx='4.3' cy='4.3' r='3.3' fill='none' stroke='#444' stroke-width='1.2'/><path d='M6.7 6.7 L9.5 9.5' stroke='#444' stroke-width='1.5'/></svg>
<div class='b' style='left:348.1px;top:99.1px;width:161.6px;height:580.6px;background:#fcfcfc;border:1px solid #a0a0a0;border-left:1.8px solid #a0a0a0;border-bottom:1.6px solid #a0a0a0;'></div>
<div class='b' style='left:349.3px;top:100.1px;width:159.4px;height:16.8px;background:linear-gradient(#d6d6d6,#cacaca);border-bottom:1px solid #a8a8a8;'></div>
<div class='t' style='left:351.5px;top:101.55px;font-size:10.81px;line-height:13px;color:#333;font-weight:normal;font-style:normal;transform:scaleX(0.955);transform-origin:0 0;'>Listas de reproducción</div>
<svg style='left:350.5px;top:127.5px' width='9' height='7'><path d='M0.5 0.5 L7.5 0.5 L4 6 Z' fill='#2a2a2a'/></svg>
<div class='t' style='left:390.7px;top:124.03px;font-size:10.30px;line-height:12px;color:#1e1e1e;font-weight:normal;font-style:normal;transform:scaleX(0.955);transform-origin:0 0;'>Static playlists</div>
<div class='t' style='left:372.2px;top:144.77px;font-size:10.30px;line-height:12px;color:#1e1e1e;font-weight:normal;font-style:normal;transform:scaleX(0.955);transform-origin:0 0;width:142.72px;overflow:hidden;'>00-ben_harper_and_relentless7</div>
<div class='t' style='left:372.2px;top:165.51px;font-size:10.30px;line-height:12px;color:#1e1e1e;font-weight:normal;font-style:normal;transform:scaleX(0.955);transform-origin:0 0;width:142.72px;overflow:hidden;'>1958-Milestones</div>
<div class='t' style='left:372.2px;top:186.25px;font-size:10.30px;line-height:12px;color:#1e1e1e;font-weight:normal;font-style:normal;transform:scaleX(0.955);transform-origin:0 0;width:142.72px;overflow:hidden;'>A Love Supreme (Deluxe Edition)</div>
<div class='t' style='left:372.2px;top:206.99px;font-size:10.30px;line-height:12px;color:#1e1e1e;font-weight:normal;font-style:normal;transform:scaleX(0.955);transform-origin:0 0;width:142.72px;overflow:hidden;'>A Love Supreme (Deluxe Edition)</div>
<div class='t' style='left:372.2px;top:227.73px;font-size:10.30px;line-height:12px;color:#1e1e1e;font-weight:normal;font-style:normal;transform:scaleX(0.955);transform-origin:0 0;width:142.72px;overflow:hidden;'>Bumpin&#x27;</div>
<div class='t' style='left:372.2px;top:248.47px;font-size:10.30px;line-height:12px;color:#1e1e1e;font-weight:normal;font-style:normal;transform:scaleX(0.955);transform-origin:0 0;width:142.72px;overflow:hidden;'>Dido Don&#x27;t Believe In Love Lista</div>
<div class='t' style='left:372.2px;top:269.21px;font-size:10.30px;line-height:12px;color:#1e1e1e;font-weight:normal;font-style:normal;transform:scaleX(0.955);transform-origin:0 0;width:142.72px;overflow:hidden;'>John Coltrane - Giant Steps</div>
<div class='t' style='left:372.2px;top:289.95px;font-size:10.30px;line-height:12px;color:#1e1e1e;font-weight:normal;font-style:normal;transform:scaleX(0.955);transform-origin:0 0;width:142.72px;overflow:hidden;'>Miles Ahead</div>
<div class='t' style='left:372.2px;top:310.69px;font-size:10.30px;line-height:12px;color:#1e1e1e;font-weight:normal;font-style:normal;transform:scaleX(0.955);transform-origin:0 0;width:142.72px;overflow:hidden;'>Mingus-Ah Um</div>
<div class='t' style='left:372.2px;top:331.43px;font-size:10.30px;line-height:12px;color:#1e1e1e;font-weight:normal;font-style:normal;transform:scaleX(0.955);transform-origin:0 0;width:142.72px;overflow:hidden;'>The Sidewinder</div>
<svg style='left:350.5px;top:355.64px' width='9' height='7'><path d='M0.5 0.5 L7.5 0.5 L4 6 Z' fill='#2a2a2a'/></svg>
<div class='t' style='left:390.7px;top:352.17px;font-size:10.30px;line-height:12px;color:#1e1e1e;font-weight:normal;font-style:normal;transform:scaleX(0.955);transform-origin:0 0;'>Dynamic playlists</div>
<div class='t' style='left:372.2px;top:372.91px;font-size:10.30px;line-height:12px;color:#1e1e1e;font-weight:normal;font-style:normal;transform:scaleX(0.955);transform-origin:0 0;width:142.72px;overflow:hidden;'>100 Random Jazz Tracks</div>
<div class='b' style='left:349.8px;top:389.41999999999996px;width:158.9px;height:20.3px;background:linear-gradient(#a4c4ec,#7ca6da);border:1px dotted #6890c8;'></div>
<div class='t' style='left:372.2px;top:393.65px;font-size:10.30px;line-height:12px;color:#e8eef8;font-weight:normal;font-style:normal;transform:scaleX(0.955);transform-origin:0 0;width:142.72px;overflow:hidden;'>80s Music</div>
<div class='t' style='left:372.2px;top:414.39px;font-size:10.30px;line-height:12px;color:#1e1e1e;font-weight:normal;font-style:normal;transform:scaleX(0.955);transform-origin:0 0;width:142.72px;overflow:hidden;'>JazzSongs</div>
<div class='t' style='left:372.2px;top:435.13px;font-size:10.30px;line-height:12px;color:#1e1e1e;font-weight:normal;font-style:normal;transform:scaleX(0.955);transform-origin:0 0;width:142.72px;overflow:hidden;'>Pistas mas valoradas</div>
<div class='t' style='left:372.2px;top:455.87px;font-size:10.30px;line-height:12px;color:#1e1e1e;font-weight:normal;font-style:normal;transform:scaleX(0.955);transform-origin:0 0;width:142.72px;overflow:hidden;'>Pistas recientemente añadidas</div>
<div class='t' style='left:372.2px;top:476.61px;font-size:10.30px;line-height:12px;color:#1e1e1e;font-weight:normal;font-style:normal;transform:scaleX(0.955);transform-origin:0 0;width:142.72px;overflow:hidden;'>Prueba</div>
<div class='t' style='left:372.2px;top:497.35px;font-size:10.30px;line-height:12px;color:#1e1e1e;font-weight:normal;font-style:normal;transform:scaleX(0.955);transform-origin:0 0;width:142.72px;overflow:hidden;'>Prueba1</div>
<div class='t' style='left:372.2px;top:518.09px;font-size:10.30px;line-height:12px;color:#1e1e1e;font-weight:normal;font-style:normal;transform:scaleX(0.955);transform-origin:0 0;width:142.72px;overflow:hidden;'>This is what I call Music Random</div>
<div class='t' style='left:372.2px;top:538.83px;font-size:10.30px;line-height:12px;color:#1e1e1e;font-weight:normal;font-style:normal;transform:scaleX(0.955);transform-origin:0 0;width:142.72px;overflow:hidden;'>últimas pistas reproducidas</div>
<svg style='left:370px;top:119px' width='18' height='20'><defs><linearGradient id='ng' x1='0' y1='0' x2='0' y2='1'><stop offset='0' stop-color='#40c040'/><stop offset='1' stop-color='#1a901a'/></linearGradient></defs><ellipse cx='6' cy='16.3' rx='4.1' ry='2.5' transform='rotate(-18 6 16.3)' fill='url(#ng)'/><rect x='8.3' y='2' width='1.9' height='14.5' fill='#22a022'/><path d='M9.2 1.8 Q10.5 6 15.8 7.4 Q13 8.8 9.5 6.8 Z' fill='#22a022'/></svg>
<svg style='left:369px;top:347px' width='20' height='20'><rect x='2.3' y='2.5' width='7' height='6' rx='1.5' fill='#f0f0f0' stroke='#444' stroke-width='1.1' stroke-dasharray='1.6 0.9'/><circle cx='5.8' cy='5.5' r='0.9' fill='#777'/><path d='M17.80,10.50 L17.67,11.66 L16.11,12.19 L15.65,12.93 L15.84,14.57 L14.86,15.19 L13.47,14.30 L12.60,14.40 L11.44,15.57 L10.34,15.19 L10.17,13.55 L9.55,12.93 L7.91,12.76 L7.53,11.66 L8.70,10.50 L8.80,9.63 L7.91,8.24 L8.53,7.26 L10.17,7.45 L10.91,6.99 L11.44,5.43 L12.60,5.30 L13.47,6.70 L14.29,6.99 L15.84,6.43 L16.67,7.26 L16.11,8.81 L16.40,9.63 Z' fill='#d8d8d8' stroke='#333' stroke-width='1' stroke-linejoin='round'/><circle cx='12.6' cy='10.5' r='1.4' fill='#999'/><rect x='1.3' y='11' width='6' height='6.3' rx='1.5' fill='#f0f0f0' stroke='#444' stroke-width='1.1' stroke-dasharray='1.6 0.9'/><circle cx='4.3' cy='14.2' r='0.9' fill='#777'/></svg>
<div class='b' style='left:349.3px;top:666px;width:159.4px;height:12.4px;background:#f8f8f8;border-top:1px solid #b0b0b0;'></div>
<div class='b' style='left:351.6px;top:669.2px;width:55px;height:7.2px;background:#e0e0e0;border:1px solid #a0a0a0;border-radius:3.6px;'></div>
<div class='b' style='left:514.5px;top:99.1px;width:679px;height:580.6px;background:#fcfcfc;border:1px solid #a0a0a0;border-bottom:1.6px solid #a0a0a0;'></div>
<div class='b' style='left:515.5px;top:100.1px;width:677px;height:19.5px;background:linear-gradient(#eeeeee,#fafafa 55%,#fdfdfd);border-bottom:1.5px solid #a4a4a4;'></div>
<div class='b' style='left:530.6px;top:102.4px;width:1px;height:16.4px;border-left:1px dotted #9a9a9a;'></div>
<div class='b' style='left:703.6px;top:102.4px;width:1px;height:16.4px;border-left:1px dotted #9a9a9a;'></div>
<div class='b' style='left:767px;top:102.4px;width:1px;height:16.4px;border-left:1px dotted #9a9a9a;'></div>
<div class='b' style='left:976px;top:102.4px;width:1px;height:16.4px;border-left:1px dotted #9a9a9a;'></div>
<div class='b' style='left:1190.5px;top:102.4px;width:1px;height:16.4px;border-left:1px dotted #9a9a9a;'></div>
<div class='t' style='left:516.8px;top:103.53px;font-size:10.30px;line-height:12px;color:#222;font-weight:normal;font-style:normal;transform:scaleX(0.955);transform-origin:0 0;'>#</div>
<div class='t' style='left:533.3px;top:103.53px;font-size:10.30px;line-height:12px;color:#222;font-weight:normal;font-style:normal;transform:scaleX(0.955);transform-origin:0 0;'>Title</div>
<div class='t' style='left:705.6px;top:103.53px;font-size:10.30px;line-height:12px;color:#222;font-weight:normal;font-style:normal;transform:scaleX(0.955);transform-origin:0 0;'>Artist</div>
<div class='t' style='left:769.8px;top:103.53px;font-size:10.30px;line-height:12px;color:#222;font-weight:normal;font-style:normal;transform:scaleX(0.955);transform-origin:0 0;'>Album Artist</div>
<div class='t' style='left:978.4px;top:103.53px;font-size:10.30px;line-height:12px;color:#222;font-weight:normal;font-style:normal;transform:scaleX(0.955);transform-origin:0 0;'>Album</div>
<div style='position:absolute;left:515.5px;top:120px;width:666px;height:545.8px;overflow:hidden;'>
<div style='position:absolute;left:0;top:0.00px;width:666px;height:16.74px;background:#fcfcfc;'></div>
<div class='t' style='left:1.8px;top:3.63px;width:16.75px;overflow:hidden;font-size:10.3px;line-height:12px;color:#161616;transform:scaleX(0.955);transform-origin:0 0;'>8</div>
<div class='t' style='left:18.3px;top:3.63px;width:175.92px;overflow:hidden;font-size:10.3px;line-height:12px;color:#161616;transform:scaleX(0.955);transform-origin:0 0;'>A Night Like This</div>
<div class='t' style='left:191.1px;top:3.63px;width:64.29px;overflow:hidden;font-size:10.3px;line-height:12px;color:#161616;transform:scaleX(0.955);transform-origin:0 0;'>The Cure</div>
<div class='t' style='left:255.1px;top:3.63px;width:216.34px;overflow:hidden;font-size:10.3px;line-height:12px;color:#161616;transform:scaleX(0.955);transform-origin:0 0;'></div>
<div class='t' style='left:463.7px;top:3.63px;width:212.57px;overflow:hidden;font-size:10.3px;line-height:12px;color:#161616;transform:scaleX(0.955);transform-origin:0 0;'>The Head On The Door</div>
<div style='position:absolute;left:0;top:16.74px;width:666px;height:16.74px;background:#f3f3f3;'></div>
<div class='t' style='left:1.8px;top:20.37px;width:16.75px;overflow:hidden;font-size:10.3px;line-height:12px;color:#161616;transform:scaleX(0.955);transform-origin:0 0;'>14</div>
<div class='t' style='left:18.3px;top:20.37px;width:175.92px;overflow:hidden;font-size:10.3px;line-height:12px;color:#161616;transform:scaleX(0.955);transform-origin:0 0;'>One Better Day</div>
<div class='t' style='left:191.1px;top:20.37px;width:64.29px;overflow:hidden;font-size:10.3px;line-height:12px;color:#161616;transform:scaleX(0.955);transform-origin:0 0;'>Madness</div>
<div class='t' style='left:255.1px;top:20.37px;width:216.34px;overflow:hidden;font-size:10.3px;line-height:12px;color:#161616;transform:scaleX(0.955);transform-origin:0 0;'>Various Artists</div>
<div class='t' style='left:463.7px;top:20.37px;width:212.57px;overflow:hidden;font-size:10.3px;line-height:12px;color:#161616;transform:scaleX(0.955);transform-origin:0 0;'>Now That&#x27;s What I Call Music 03</div>
<div style='position:absolute;left:0;top:33.48px;width:666px;height:16.74px;background:#fcfcfc;'></div>
<div class='t' style='left:1.8px;top:37.11px;width:16.75px;overflow:hidden;font-size:10.3px;line-height:12px;color:#161616;transform:scaleX(0.955);transform-origin:0 0;'>1</div>
<div class='t' style='left:18.3px;top:37.11px;width:175.92px;overflow:hidden;font-size:10.3px;line-height:12px;color:#161616;transform:scaleX(0.955);transform-origin:0 0;'>Twisting By The Pool</div>
<div class='t' style='left:191.1px;top:37.11px;width:64.29px;overflow:hidden;font-size:10.3px;line-height:12px;color:#161616;transform:scaleX(0.955);transform-origin:0 0;'>Dire Straits</div>
<div class='t' style='left:255.1px;top:37.11px;width:216.34px;overflow:hidden;font-size:10.3px;line-height:12px;color:#161616;transform:scaleX(0.955);transform-origin:0 0;'></div>
<div class='t' style='left:463.7px;top:37.11px;width:212.57px;overflow:hidden;font-size:10.3px;line-height:12px;color:#161616;transform:scaleX(0.955);transform-origin:0 0;'>Extended Dance Play</div>
<div style='position:absolute;left:0;top:50.22px;width:666px;height:16.74px;background:#f3f3f3;'></div>
<div class='t' style='left:1.8px;top:53.85px;width:16.75px;overflow:hidden;font-size:10.3px;line-height:12px;color:#161616;transform:scaleX(0.955);transform-origin:0 0;'>6</div>
<div class='t' style='left:18.3px;top:53.85px;width:175.92px;overflow:hidden;font-size:10.3px;line-height:12px;color:#161616;transform:scaleX(0.955);transform-origin:0 0;'>Dinorah, Dinorah</div>
<div class='t' style='left:191.1px;top:53.85px;width:64.29px;overflow:hidden;font-size:10.3px;line-height:12px;color:#161616;transform:scaleX(0.955);transform-origin:0 0;'>George Benson</div>
<div class='t' style='left:255.1px;top:53.85px;width:216.34px;overflow:hidden;font-size:10.3px;line-height:12px;color:#161616;transform:scaleX(0.955);transform-origin:0 0;'></div>
<div class='t' style='left:463.7px;top:53.85px;width:212.57px;overflow:hidden;font-size:10.3px;line-height:12px;color:#161616;transform:scaleX(0.955);transform-origin:0 0;'>Give Me The Night</div>
<div style='position:absolute;left:0;top:66.96px;width:666px;height:16.74px;background:#fcfcfc;'></div>
<div class='t' style='left:1.8px;top:70.59px;width:16.75px;overflow:hidden;font-size:10.3px;line-height:12px;color:#161616;transform:scaleX(0.955);transform-origin:0 0;'>9</div>
<div class='t' style='left:18.3px;top:70.59px;width:175.92px;overflow:hidden;font-size:10.3px;line-height:12px;color:#161616;transform:scaleX(0.955);transform-origin:0 0;'>Après-Midi</div>
<div class='t' style='left:191.1px;top:70.59px;width:64.29px;overflow:hidden;font-size:10.3px;line-height:12px;color:#161616;transform:scaleX(0.955);transform-origin:0 0;'>NightNoise</div>
<div class='t' style='left:255.1px;top:70.59px;width:216.34px;overflow:hidden;font-size:10.3px;line-height:12px;color:#161616;transform:scaleX(0.955);transform-origin:0 0;'></div>
<div class='t' style='left:463.7px;top:70.59px;width:212.57px;overflow:hidden;font-size:10.3px;line-height:12px;color:#161616;transform:scaleX(0.955);transform-origin:0 0;'>Something Of Time</div>
<div style='position:absolute;left:0;top:83.70px;width:666px;height:16.74px;background:#f3f3f3;'></div>
<div class='t' style='left:1.8px;top:87.33px;width:16.75px;overflow:hidden;font-size:10.3px;line-height:12px;color:#161616;transform:scaleX(0.955);transform-origin:0 0;'>8</div>
<div class='t' style='left:18.3px;top:87.33px;width:175.92px;overflow:hidden;font-size:10.3px;line-height:12px;color:#161616;transform:scaleX(0.955);transform-origin:0 0;'>Trabajo Duro</div>
<div class='t' style='left:191.1px;top:87.33px;width:64.29px;overflow:hidden;font-size:10.3px;line-height:12px;color:#161616;transform:scaleX(0.955);transform-origin:0 0;'>El Ultimo De La Fila</div>
<div class='t' style='left:255.1px;top:87.33px;width:216.34px;overflow:hidden;font-size:10.3px;line-height:12px;color:#161616;transform:scaleX(0.955);transform-origin:0 0;'></div>
<div class='t' style='left:463.7px;top:87.33px;width:212.57px;overflow:hidden;font-size:10.3px;line-height:12px;color:#161616;transform:scaleX(0.955);transform-origin:0 0;'>Como La Cabeza Al Sombrero</div>
<div style='position:absolute;left:0;top:100.44px;width:666px;height:16.74px;background:#fcfcfc;'></div>
<div class='t' style='left:1.8px;top:104.07px;width:16.75px;overflow:hidden;font-size:10.3px;line-height:12px;color:#161616;transform:scaleX(0.955);transform-origin:0 0;'>10</div>
<div class='t' style='left:18.3px;top:104.07px;width:175.92px;overflow:hidden;font-size:10.3px;line-height:12px;color:#161616;transform:scaleX(0.955);transform-origin:0 0;'>Slave To Love</div>
<div class='t' style='left:191.1px;top:104.07px;width:64.29px;overflow:hidden;font-size:10.3px;line-height:12px;color:#161616;transform:scaleX(0.955);transform-origin:0 0;'>Bryan Ferry</div>
<div class='t' style='left:255.1px;top:104.07px;width:216.34px;overflow:hidden;font-size:10.3px;line-height:12px;color:#161616;transform:scaleX(0.955);transform-origin:0 0;'>Various Artists</div>
<div class='t' style='left:463.7px;top:104.07px;width:212.57px;overflow:hidden;font-size:10.3px;line-height:12px;color:#161616;transform:scaleX(0.955);transform-origin:0 0;'>Now That&#x27;s What I Call Music 05</div>
<div style='position:absolute;left:0;top:117.18px;width:666px;height:16.74px;background:#f3f3f3;'></div>
<div class='t' style='left:1.8px;top:120.81px;width:16.75px;overflow:hidden;font-size:10.3px;line-height:12px;color:#161616;transform:scaleX(0.955);transform-origin:0 0;'>4</div>
<div class='t' style='left:18.3px;top:120.81px;width:175.92px;overflow:hidden;font-size:10.3px;line-height:12px;color:#161616;transform:scaleX(0.955);transform-origin:0 0;'>U.M.M.G</div>
<div class='t' style='left:191.1px;top:120.81px;width:64.29px;overflow:hidden;font-size:10.3px;line-height:12px;color:#161616;transform:scaleX(0.955);transform-origin:0 0;'>Duke Ellington</div>
<div class='t' style='left:255.1px;top:120.81px;width:216.34px;overflow:hidden;font-size:10.3px;line-height:12px;color:#161616;transform:scaleX(0.955);transform-origin:0 0;'></div>
<div class='t' style='left:463.7px;top:120.81px;width:212.57px;overflow:hidden;font-size:10.3px;line-height:12px;color:#161616;transform:scaleX(0.955);transform-origin:0 0;'>&#x27;...And His Mother Called Him Bill&#x27;</div>
<div style='position:absolute;left:0;top:133.92px;width:666px;height:16.74px;background:#fcfcfc;'></div>
<div class='t' style='left:1.8px;top:137.55px;width:16.75px;overflow:hidden;font-size:10.3px;line-height:12px;color:#161616;transform:scaleX(0.955);transform-origin:0 0;'>6</div>
<div class='t' style='left:18.3px;top:137.55px;width:175.92px;overflow:hidden;font-size:10.3px;line-height:12px;color:#161616;transform:scaleX(0.955);transform-origin:0 0;'>Kick It In</div>
<div class='t' style='left:191.1px;top:137.55px;width:64.29px;overflow:hidden;font-size:10.3px;line-height:12px;color:#161616;transform:scaleX(0.955);transform-origin:0 0;'>Simple Minds</div>
<div class='t' style='left:255.1px;top:137.55px;width:216.34px;overflow:hidden;font-size:10.3px;line-height:12px;color:#161616;transform:scaleX(0.955);transform-origin:0 0;'></div>
<div class='t' style='left:463.7px;top:137.55px;width:212.57px;overflow:hidden;font-size:10.3px;line-height:12px;color:#161616;transform:scaleX(0.955);transform-origin:0 0;'>Street Fighting Years</div>
<div style='position:absolute;left:0;top:150.66px;width:666px;height:16.74px;background:#f3f3f3;'></div>
<div class='t' style='left:1.8px;top:154.29px;width:16.75px;overflow:hidden;font-size:10.3px;line-height:12px;color:#161616;transform:scaleX(0.955);transform-origin:0 0;'>5</div>
<div class='t' style='left:18.3px;top:154.29px;width:175.92px;overflow:hidden;font-size:10.3px;line-height:12px;color:#161616;transform:scaleX(0.955);transform-origin:0 0;'>Where Is The Party</div>
<div class='t' style='left:191.1px;top:154.29px;width:64.29px;overflow:hidden;font-size:10.3px;line-height:12px;color:#161616;transform:scaleX(0.955);transform-origin:0 0;'>Madonna</div>
<div class='t' style='left:255.1px;top:154.29px;width:216.34px;overflow:hidden;font-size:10.3px;line-height:12px;color:#161616;transform:scaleX(0.955);transform-origin:0 0;'></div>
<div class='t' style='left:463.7px;top:154.29px;width:212.57px;overflow:hidden;font-size:10.3px;line-height:12px;color:#161616;transform:scaleX(0.955);transform-origin:0 0;'>True Blue</div>
<div style='position:absolute;left:0;top:167.40px;width:666px;height:16.74px;background:#fcfcfc;'></div>
<div class='t' style='left:1.8px;top:171.03px;width:16.75px;overflow:hidden;font-size:10.3px;line-height:12px;color:#161616;transform:scaleX(0.955);transform-origin:0 0;'>3</div>
<div class='t' style='left:18.3px;top:171.03px;width:175.92px;overflow:hidden;font-size:10.3px;line-height:12px;color:#161616;transform:scaleX(0.955);transform-origin:0 0;'>Travels</div>
<div class='t' style='left:191.1px;top:171.03px;width:64.29px;overflow:hidden;font-size:10.3px;line-height:12px;color:#161616;transform:scaleX(0.955);transform-origin:0 0;'>Pat Metheny</div>
<div class='t' style='left:255.1px;top:171.03px;width:216.34px;overflow:hidden;font-size:10.3px;line-height:12px;color:#161616;transform:scaleX(0.955);transform-origin:0 0;'></div>
<div class='t' style='left:463.7px;top:171.03px;width:212.57px;overflow:hidden;font-size:10.3px;line-height:12px;color:#161616;transform:scaleX(0.955);transform-origin:0 0;'>Travels (cd2)</div>
<div style='position:absolute;left:0;top:184.14px;width:666px;height:16.74px;background:#f3f3f3;'></div>
<div class='t' style='left:1.8px;top:187.77px;width:16.75px;overflow:hidden;font-size:10.3px;line-height:12px;color:#161616;transform:scaleX(0.955);transform-origin:0 0;'>6</div>
<div class='t' style='left:18.3px;top:187.77px;width:175.92px;overflow:hidden;font-size:10.3px;line-height:12px;color:#161616;transform:scaleX(0.955);transform-origin:0 0;'>This Earth That You Walk</div>
<div class='t' style='left:191.1px;top:187.77px;width:64.29px;overflow:hidden;font-size:10.3px;line-height:12px;color:#161616;transform:scaleX(0.955);transform-origin:0 0;'>Simple Minds</div>
<div class='t' style='left:255.1px;top:187.77px;width:216.34px;overflow:hidden;font-size:10.3px;line-height:12px;color:#161616;transform:scaleX(0.955);transform-origin:0 0;'></div>
<div class='t' style='left:463.7px;top:187.77px;width:212.57px;overflow:hidden;font-size:10.3px;line-height:12px;color:#161616;transform:scaleX(0.955);transform-origin:0 0;'>Sons And Fascination</div>
<div style='position:absolute;left:0;top:200.88px;width:666px;height:16.74px;background:#fcfcfc;'></div>
<div class='t' style='left:1.8px;top:204.51px;width:16.75px;overflow:hidden;font-size:10.3px;line-height:12px;color:#161616;transform:scaleX(0.955);transform-origin:0 0;'>7</div>
<div class='t' style='left:18.3px;top:204.51px;width:175.92px;overflow:hidden;font-size:10.3px;line-height:12px;color:#161616;transform:scaleX(0.955);transform-origin:0 0;'>Phantom Lord</div>
<div class='t' style='left:191.1px;top:204.51px;width:64.29px;overflow:hidden;font-size:10.3px;line-height:12px;color:#161616;transform:scaleX(0.955);transform-origin:0 0;'>Metallica</div>
<div class='t' style='left:255.1px;top:204.51px;width:216.34px;overflow:hidden;font-size:10.3px;line-height:12px;color:#161616;transform:scaleX(0.955);transform-origin:0 0;'></div>
<div class='t' style='left:463.7px;top:204.51px;width:212.57px;overflow:hidden;font-size:10.3px;line-height:12px;color:#161616;transform:scaleX(0.955);transform-origin:0 0;'>Kill Em All</div>
<div style='position:absolute;left:0;top:217.62px;width:666px;height:16.74px;background:#f3f3f3;'></div>
<div class='t' style='left:1.8px;top:221.25px;width:16.75px;overflow:hidden;font-size:10.3px;line-height:12px;color:#161616;transform:scaleX(0.955);transform-origin:0 0;'>7</div>
<div class='t' style='left:18.3px;top:221.25px;width:175.92px;overflow:hidden;font-size:10.3px;line-height:12px;color:#161616;transform:scaleX(0.955);transform-origin:0 0;'>Round and Around</div>
<div class='t' style='left:191.1px;top:221.25px;width:64.29px;overflow:hidden;font-size:10.3px;line-height:12px;color:#161616;transform:scaleX(0.955);transform-origin:0 0;'>Pink Floyd</div>
<div class='t' style='left:255.1px;top:221.25px;width:216.34px;overflow:hidden;font-size:10.3px;line-height:12px;color:#161616;transform:scaleX(0.955);transform-origin:0 0;'></div>
<div class='t' style='left:463.7px;top:221.25px;width:212.57px;overflow:hidden;font-size:10.3px;line-height:12px;color:#161616;transform:scaleX(0.955);transform-origin:0 0;'>A Momentary Lapse of Reason</div>
<div style='position:absolute;left:0;top:234.36px;width:666px;height:16.74px;background:#fcfcfc;'></div>
<div class='t' style='left:1.8px;top:237.99px;width:16.75px;overflow:hidden;font-size:10.3px;line-height:12px;color:#161616;transform:scaleX(0.955);transform-origin:0 0;'>3</div>
<div class='t' style='left:18.3px;top:237.99px;width:175.92px;overflow:hidden;font-size:10.3px;line-height:12px;color:#161616;transform:scaleX(0.955);transform-origin:0 0;'>Windmill</div>
<div class='t' style='left:191.1px;top:237.99px;width:64.29px;overflow:hidden;font-size:10.3px;line-height:12px;color:#161616;transform:scaleX(0.955);transform-origin:0 0;'>Lee Ritenour</div>
<div class='t' style='left:255.1px;top:237.99px;width:216.34px;overflow:hidden;font-size:10.3px;line-height:12px;color:#161616;transform:scaleX(0.955);transform-origin:0 0;'></div>
<div class='t' style='left:463.7px;top:237.99px;width:212.57px;overflow:hidden;font-size:10.3px;line-height:12px;color:#161616;transform:scaleX(0.955);transform-origin:0 0;'>Portrait</div>
<div style='position:absolute;left:0;top:251.10px;width:666px;height:16.74px;background:#f3f3f3;'></div>
<div class='t' style='left:1.8px;top:254.73px;width:16.75px;overflow:hidden;font-size:10.3px;line-height:12px;color:#161616;transform:scaleX(0.955);transform-origin:0 0;'>4</div>
<div class='t' style='left:18.3px;top:254.73px;width:175.92px;overflow:hidden;font-size:10.3px;line-height:12px;color:#161616;transform:scaleX(0.955);transform-origin:0 0;'>Foreing Affair</div>
<div class='t' style='left:191.1px;top:254.73px;width:64.29px;overflow:hidden;font-size:10.3px;line-height:12px;color:#161616;transform:scaleX(0.955);transform-origin:0 0;'>Mike Oldfield</div>
<div class='t' style='left:255.1px;top:254.73px;width:216.34px;overflow:hidden;font-size:10.3px;line-height:12px;color:#161616;transform:scaleX(0.955);transform-origin:0 0;'></div>
<div class='t' style='left:463.7px;top:254.73px;width:212.57px;overflow:hidden;font-size:10.3px;line-height:12px;color:#161616;transform:scaleX(0.955);transform-origin:0 0;'>Crises</div>
<div style='position:absolute;left:0;top:267.84px;width:666px;height:16.74px;background:#fcfcfc;'></div>
<div class='t' style='left:1.8px;top:271.47px;width:16.75px;overflow:hidden;font-size:10.3px;line-height:12px;color:#161616;transform:scaleX(0.955);transform-origin:0 0;'>5</div>
<div class='t' style='left:18.3px;top:271.47px;width:175.92px;overflow:hidden;font-size:10.3px;line-height:12px;color:#161616;transform:scaleX(0.955);transform-origin:0 0;'>(Feels Like) Heaven</div>
<div class='t' style='left:191.1px;top:271.47px;width:64.29px;overflow:hidden;font-size:10.3px;line-height:12px;color:#161616;transform:scaleX(0.955);transform-origin:0 0;'>Fiction Factory</div>
<div class='t' style='left:255.1px;top:271.47px;width:216.34px;overflow:hidden;font-size:10.3px;line-height:12px;color:#161616;transform:scaleX(0.955);transform-origin:0 0;'>Various Artists</div>
<div class='t' style='left:463.7px;top:271.47px;width:212.57px;overflow:hidden;font-size:10.3px;line-height:12px;color:#161616;transform:scaleX(0.955);transform-origin:0 0;'>Now That&#x27;s What I Call Music 02</div>
<div style='position:absolute;left:0;top:284.58px;width:666px;height:16.74px;background:#f3f3f3;'></div>
<div class='t' style='left:1.8px;top:288.21px;width:16.75px;overflow:hidden;font-size:10.3px;line-height:12px;color:#161616;transform:scaleX(0.955);transform-origin:0 0;'>3</div>
<div class='t' style='left:18.3px;top:288.21px;width:175.92px;overflow:hidden;font-size:10.3px;line-height:12px;color:#161616;transform:scaleX(0.955);transform-origin:0 0;'>Thinking Of You</div>
<div class='t' style='left:191.1px;top:288.21px;width:64.29px;overflow:hidden;font-size:10.3px;line-height:12px;color:#161616;transform:scaleX(0.955);transform-origin:0 0;'>Sister Sledge</div>
<div class='t' style='left:255.1px;top:288.21px;width:216.34px;overflow:hidden;font-size:10.3px;line-height:12px;color:#161616;transform:scaleX(0.955);transform-origin:0 0;'>Various Artists</div>
<div class='t' style='left:463.7px;top:288.21px;width:212.57px;overflow:hidden;font-size:10.3px;line-height:12px;color:#161616;transform:scaleX(0.955);transform-origin:0 0;'>Now That&#x27;s What I Call Music 03</div>
<div style='position:absolute;left:0;top:301.32px;width:666px;height:16.74px;background:#fcfcfc;'></div>
<div class='t' style='left:1.8px;top:304.95px;width:16.75px;overflow:hidden;font-size:10.3px;line-height:12px;color:#161616;transform:scaleX(0.955);transform-origin:0 0;'>3</div>
<div class='t' style='left:18.3px;top:304.95px;width:175.92px;overflow:hidden;font-size:10.3px;line-height:12px;color:#161616;transform:scaleX(0.955);transform-origin:0 0;'>Soul Lament</div>
<div class='t' style='left:191.1px;top:304.95px;width:64.29px;overflow:hidden;font-size:10.3px;line-height:12px;color:#161616;transform:scaleX(0.955);transform-origin:0 0;'>Kenny Burrell</div>
<div class='t' style='left:255.1px;top:304.95px;width:216.34px;overflow:hidden;font-size:10.3px;line-height:12px;color:#161616;transform:scaleX(0.955);transform-origin:0 0;'></div>
<div class='t' style='left:463.7px;top:304.95px;width:212.57px;overflow:hidden;font-size:10.3px;line-height:12px;color:#161616;transform:scaleX(0.955);transform-origin:0 0;'>Midnight Blue</div>
<div style='position:absolute;left:0;top:318.06px;width:666px;height:16.74px;background:#f3f3f3;'></div>
<div class='t' style='left:1.8px;top:321.69px;width:16.75px;overflow:hidden;font-size:10.3px;line-height:12px;color:#161616;transform:scaleX(0.955);transform-origin:0 0;'>3</div>
<div class='t' style='left:18.3px;top:321.69px;width:175.92px;overflow:hidden;font-size:10.3px;line-height:12px;color:#161616;transform:scaleX(0.955);transform-origin:0 0;'>Englishman In New York</div>
<div class='t' style='left:191.1px;top:321.69px;width:64.29px;overflow:hidden;font-size:10.3px;line-height:12px;color:#161616;transform:scaleX(0.955);transform-origin:0 0;'>Sting</div>
<div class='t' style='left:255.1px;top:321.69px;width:216.34px;overflow:hidden;font-size:10.3px;line-height:12px;color:#161616;transform:scaleX(0.955);transform-origin:0 0;'></div>
<div class='t' style='left:463.7px;top:321.69px;width:212.57px;overflow:hidden;font-size:10.3px;line-height:12px;color:#161616;transform:scaleX(0.955);transform-origin:0 0;'>Nothing Like The Sun</div>
<div style='position:absolute;left:0;top:334.80px;width:666px;height:16.74px;background:#fcfcfc;'></div>
<div class='t' style='left:1.8px;top:338.43px;width:16.75px;overflow:hidden;font-size:10.3px;line-height:12px;color:#161616;transform:scaleX(0.955);transform-origin:0 0;'>6</div>
<div class='t' style='left:18.3px;top:338.43px;width:175.92px;overflow:hidden;font-size:10.3px;line-height:12px;color:#161616;transform:scaleX(0.955);transform-origin:0 0;'>Romeo And Juliet</div>
<div class='t' style='left:191.1px;top:338.43px;width:64.29px;overflow:hidden;font-size:10.3px;line-height:12px;color:#161616;transform:scaleX(0.955);transform-origin:0 0;'>Dire Straits</div>
<div class='t' style='left:255.1px;top:338.43px;width:216.34px;overflow:hidden;font-size:10.3px;line-height:12px;color:#161616;transform:scaleX(0.955);transform-origin:0 0;'></div>
<div class='t' style='left:463.7px;top:338.43px;width:212.57px;overflow:hidden;font-size:10.3px;line-height:12px;color:#161616;transform:scaleX(0.955);transform-origin:0 0;'>Money For Nothing</div>
<div style='position:absolute;left:0;top:351.54px;width:666px;height:16.74px;background:#f3f3f3;'></div>
<div class='t' style='left:1.8px;top:355.17px;width:16.75px;overflow:hidden;font-size:10.3px;line-height:12px;color:#161616;transform:scaleX(0.955);transform-origin:0 0;'>4</div>
<div class='t' style='left:18.3px;top:355.17px;width:175.92px;overflow:hidden;font-size:10.3px;line-height:12px;color:#161616;transform:scaleX(0.955);transform-origin:0 0;'>The Falcon</div>
<div class='t' style='left:191.1px;top:355.17px;width:64.29px;overflow:hidden;font-size:10.3px;line-height:12px;color:#161616;transform:scaleX(0.955);transform-origin:0 0;'>Pat Metheny Group</div>
<div class='t' style='left:255.1px;top:355.17px;width:216.34px;overflow:hidden;font-size:10.3px;line-height:12px;color:#161616;transform:scaleX(0.955);transform-origin:0 0;'></div>
<div class='t' style='left:463.7px;top:355.17px;width:212.57px;overflow:hidden;font-size:10.3px;line-height:12px;color:#161616;transform:scaleX(0.955);transform-origin:0 0;'>The Falcon And The Snowman</div>
<div style='position:absolute;left:0;top:368.28px;width:666px;height:16.74px;background:#fcfcfc;'></div>
<div class='t' style='left:1.8px;top:371.91px;width:16.75px;overflow:hidden;font-size:10.3px;line-height:12px;color:#161616;transform:scaleX(0.955);transform-origin:0 0;'>1</div>
<div class='t' style='left:18.3px;top:371.91px;width:175.92px;overflow:hidden;font-size:10.3px;line-height:12px;color:#161616;transform:scaleX(0.955);transform-origin:0 0;'>So Far Away</div>
<div class='t' style='left:191.1px;top:371.91px;width:64.29px;overflow:hidden;font-size:10.3px;line-height:12px;color:#161616;transform:scaleX(0.955);transform-origin:0 0;'>Dire Straits</div>
<div class='t' style='left:255.1px;top:371.91px;width:216.34px;overflow:hidden;font-size:10.3px;line-height:12px;color:#161616;transform:scaleX(0.955);transform-origin:0 0;'></div>
<div class='t' style='left:463.7px;top:371.91px;width:212.57px;overflow:hidden;font-size:10.3px;line-height:12px;color:#161616;transform:scaleX(0.955);transform-origin:0 0;'>Brothers In Arms</div>
<div style='position:absolute;left:0;top:385.02px;width:666px;height:16.74px;background:#f3f3f3;'></div>
<div class='t' style='left:1.8px;top:388.65px;width:16.75px;overflow:hidden;font-size:10.3px;line-height:12px;color:#161616;transform:scaleX(0.955);transform-origin:0 0;'>9</div>
<div class='t' style='left:18.3px;top:388.65px;width:175.92px;overflow:hidden;font-size:10.3px;line-height:12px;color:#161616;transform:scaleX(0.955);transform-origin:0 0;'>Midnight Love Affair</div>
<div class='t' style='left:191.1px;top:388.65px;width:64.29px;overflow:hidden;font-size:10.3px;line-height:12px;color:#161616;transform:scaleX(0.955);transform-origin:0 0;'>George Benson</div>
<div class='t' style='left:255.1px;top:388.65px;width:216.34px;overflow:hidden;font-size:10.3px;line-height:12px;color:#161616;transform:scaleX(0.955);transform-origin:0 0;'></div>
<div class='t' style='left:463.7px;top:388.65px;width:212.57px;overflow:hidden;font-size:10.3px;line-height:12px;color:#161616;transform:scaleX(0.955);transform-origin:0 0;'>Give Me The Night</div>
<div style='position:absolute;left:0;top:401.76px;width:666px;height:16.74px;background:#fcfcfc;'></div>
<div class='t' style='left:1.8px;top:405.39px;width:16.75px;overflow:hidden;font-size:10.3px;line-height:12px;color:#161616;transform:scaleX(0.955);transform-origin:0 0;'>4</div>
<div class='t' style='left:18.3px;top:405.39px;width:175.92px;overflow:hidden;font-size:10.3px;line-height:12px;color:#161616;transform:scaleX(0.955);transform-origin:0 0;'>Don&#x27;t Leave Me This Way</div>
<div class='t' style='left:191.1px;top:405.39px;width:64.29px;overflow:hidden;font-size:10.3px;line-height:12px;color:#161616;transform:scaleX(0.955);transform-origin:0 0;'>Communards</div>
<div class='t' style='left:255.1px;top:405.39px;width:216.34px;overflow:hidden;font-size:10.3px;line-height:12px;color:#161616;transform:scaleX(0.955);transform-origin:0 0;'>Various Artists</div>
<div class='t' style='left:463.7px;top:405.39px;width:212.57px;overflow:hidden;font-size:10.3px;line-height:12px;color:#161616;transform:scaleX(0.955);transform-origin:0 0;'>Now That&#x27;s What I Call Music 08</div>
<div style='position:absolute;left:0;top:418.50px;width:666px;height:16.74px;background:#f3f3f3;'></div>
<div class='t' style='left:1.8px;top:422.13px;width:16.75px;overflow:hidden;font-size:10.3px;line-height:12px;color:#161616;transform:scaleX(0.955);transform-origin:0 0;'>3</div>
<div class='t' style='left:18.3px;top:422.13px;width:175.92px;overflow:hidden;font-size:10.3px;line-height:12px;color:#161616;transform:scaleX(0.955);transform-origin:0 0;'>Just One Kiss</div>
<div class='t' style='left:191.1px;top:422.13px;width:64.29px;overflow:hidden;font-size:10.3px;line-height:12px;color:#161616;transform:scaleX(0.955);transform-origin:0 0;'>The Cure</div>
<div class='t' style='left:255.1px;top:422.13px;width:216.34px;overflow:hidden;font-size:10.3px;line-height:12px;color:#161616;transform:scaleX(0.955);transform-origin:0 0;'></div>
<div class='t' style='left:463.7px;top:422.13px;width:212.57px;overflow:hidden;font-size:10.3px;line-height:12px;color:#161616;transform:scaleX(0.955);transform-origin:0 0;'>Japanese Whispers</div>
<div style='position:absolute;left:0;top:435.24px;width:666px;height:16.74px;background:#fcfcfc;'></div>
<div class='t' style='left:1.8px;top:438.87px;width:16.75px;overflow:hidden;font-size:10.3px;line-height:12px;color:#161616;transform:scaleX(0.955);transform-origin:0 0;'>8</div>
<div class='t' style='left:18.3px;top:438.87px;width:175.92px;overflow:hidden;font-size:10.3px;line-height:12px;color:#161616;transform:scaleX(0.955);transform-origin:0 0;'>Mirrors Of Love</div>
<div class='t' style='left:191.1px;top:438.87px;width:64.29px;overflow:hidden;font-size:10.3px;line-height:12px;color:#161616;transform:scaleX(0.955);transform-origin:0 0;'>Sandra</div>
<div class='t' style='left:255.1px;top:438.87px;width:216.34px;overflow:hidden;font-size:10.3px;line-height:12px;color:#161616;transform:scaleX(0.955);transform-origin:0 0;'></div>
<div class='t' style='left:463.7px;top:438.87px;width:212.57px;overflow:hidden;font-size:10.3px;line-height:12px;color:#161616;transform:scaleX(0.955);transform-origin:0 0;'>Mirrors</div>
<div style='position:absolute;left:0;top:451.98px;width:666px;height:16.74px;background:#f3f3f3;'></div>
<div class='t' style='left:1.8px;top:455.61px;width:16.75px;overflow:hidden;font-size:10.3px;line-height:12px;color:#161616;transform:scaleX(0.955);transform-origin:0 0;'>15</div>
<div class='t' style='left:18.3px;top:455.61px;width:175.92px;overflow:hidden;font-size:10.3px;line-height:12px;color:#161616;transform:scaleX(0.955);transform-origin:0 0;'>You And Me Tonight</div>
<div class='t' style='left:191.1px;top:455.61px;width:64.29px;overflow:hidden;font-size:10.3px;line-height:12px;color:#161616;transform:scaleX(0.955);transform-origin:0 0;'>Aurra</div>
<div class='t' style='left:255.1px;top:455.61px;width:216.34px;overflow:hidden;font-size:10.3px;line-height:12px;color:#161616;transform:scaleX(0.955);transform-origin:0 0;'>Various Artists</div>
<div class='t' style='left:463.7px;top:455.61px;width:212.57px;overflow:hidden;font-size:10.3px;line-height:12px;color:#161616;transform:scaleX(0.955);transform-origin:0 0;'>Now That&#x27;s What I Call Music 07</div>
<div style='position:absolute;left:0;top:468.72px;width:666px;height:16.74px;background:#fcfcfc;'></div>
<div class='t' style='left:1.8px;top:472.35px;width:16.75px;overflow:hidden;font-size:10.3px;line-height:12px;color:#161616;transform:scaleX(0.955);transform-origin:0 0;'>12</div>
<div class='t' style='left:18.3px;top:472.35px;width:175.92px;overflow:hidden;font-size:10.3px;line-height:12px;color:#161616;transform:scaleX(0.955);transform-origin:0 0;'>French Kissing In The U.S.A.</div>
<div class='t' style='left:191.1px;top:472.35px;width:64.29px;overflow:hidden;font-size:10.3px;line-height:12px;color:#161616;transform:scaleX(0.955);transform-origin:0 0;'>Debbie Harry</div>
<div class='t' style='left:255.1px;top:472.35px;width:216.34px;overflow:hidden;font-size:10.3px;line-height:12px;color:#161616;transform:scaleX(0.955);transform-origin:0 0;'>Various Artists</div>
<div class='t' style='left:463.7px;top:472.35px;width:212.57px;overflow:hidden;font-size:10.3px;line-height:12px;color:#161616;transform:scaleX(0.955);transform-origin:0 0;'>Now That&#x27;s What I Call Music 08</div>
<div style='position:absolute;left:0;top:485.46px;width:666px;height:16.74px;background:#f3f3f3;'></div>
<div class='t' style='left:1.8px;top:489.09px;width:16.75px;overflow:hidden;font-size:10.3px;line-height:12px;color:#161616;transform:scaleX(0.955);transform-origin:0 0;'>7</div>
<div class='t' style='left:18.3px;top:489.09px;width:175.92px;overflow:hidden;font-size:10.3px;line-height:12px;color:#161616;transform:scaleX(0.955);transform-origin:0 0;'>Steppin&#x27; (Live)</div>
<div class='t' style='left:191.1px;top:489.09px;width:64.29px;overflow:hidden;font-size:10.3px;line-height:12px;color:#161616;transform:scaleX(0.955);transform-origin:0 0;'>Shakatak</div>
<div class='t' style='left:255.1px;top:489.09px;width:216.34px;overflow:hidden;font-size:10.3px;line-height:12px;color:#161616;transform:scaleX(0.955);transform-origin:0 0;'></div>
<div class='t' style='left:463.7px;top:489.09px;width:212.57px;overflow:hidden;font-size:10.3px;line-height:12px;color:#161616;transform:scaleX(0.955);transform-origin:0 0;'>Drivin&#x27; Hard</div>
<div style='position:absolute;left:0;top:502.20px;width:666px;height:16.74px;background:#fcfcfc;'></div>
<div class='t' style='left:1.8px;top:505.83px;width:16.75px;overflow:hidden;font-size:10.3px;line-height:12px;color:#161616;transform:scaleX(0.955);transform-origin:0 0;'>6</div>
<div class='t' style='left:18.3px;top:505.83px;width:175.92px;overflow:hidden;font-size:10.3px;line-height:12px;color:#161616;transform:scaleX(0.955);transform-origin:0 0;'>Karen&#x27;s Journey</div>
<div class='t' style='left:191.1px;top:505.83px;width:64.29px;overflow:hidden;font-size:10.3px;line-height:12px;color:#161616;transform:scaleX(0.955);transform-origin:0 0;'>John Barry</div>
<div class='t' style='left:255.1px;top:505.83px;width:216.34px;overflow:hidden;font-size:10.3px;line-height:12px;color:#161616;transform:scaleX(0.955);transform-origin:0 0;'></div>
<div class='t' style='left:463.7px;top:505.83px;width:212.57px;overflow:hidden;font-size:10.3px;line-height:12px;color:#161616;transform:scaleX(0.955);transform-origin:0 0;'>Out of Africa</div>
<div style='position:absolute;left:0;top:518.94px;width:666px;height:16.74px;background:#f3f3f3;'></div>
<div class='t' style='left:1.8px;top:522.57px;width:16.75px;overflow:hidden;font-size:10.3px;line-height:12px;color:#161616;transform:scaleX(0.955);transform-origin:0 0;'>8</div>
<div class='t' style='left:18.3px;top:522.57px;width:175.92px;overflow:hidden;font-size:10.3px;line-height:12px;color:#161616;transform:scaleX(0.955);transform-origin:0 0;'>Red Frame/White Light</div>
<div class='t' style='left:191.1px;top:522.57px;width:64.29px;overflow:hidden;font-size:10.3px;line-height:12px;color:#161616;transform:scaleX(0.955);transform-origin:0 0;'>OMD</div>
<div class='t' style='left:255.1px;top:522.57px;width:216.34px;overflow:hidden;font-size:10.3px;line-height:12px;color:#161616;transform:scaleX(0.955);transform-origin:0 0;'></div>
<div class='t' style='left:463.7px;top:522.57px;width:212.57px;overflow:hidden;font-size:10.3px;line-height:12px;color:#161616;transform:scaleX(0.955);transform-origin:0 0;'>Orchestral Manoeuvres In The Dark</div>
<div style='position:absolute;left:0;top:535.68px;width:666px;height:16.74px;background:#fcfcfc;'></div>
<div class='t' style='left:1.8px;top:539.31px;width:16.75px;overflow:hidden;font-size:10.3px;line-height:12px;color:#161616;transform:scaleX(0.955);transform-origin:0 0;'>5</div>
<div class='t' style='left:18.3px;top:539.31px;width:175.92px;overflow:hidden;font-size:10.3px;line-height:12px;color:#161616;transform:scaleX(0.955);transform-origin:0 0;'>Take My Breath Away (love theme for</div>
<div class='t' style='left:191.1px;top:539.31px;width:64.29px;overflow:hidden;font-size:10.3px;line-height:12px;color:#161616;transform:scaleX(0.955);transform-origin:0 0;'>Berlin</div>
<div class='t' style='left:255.1px;top:539.31px;width:216.34px;overflow:hidden;font-size:10.3px;line-height:12px;color:#161616;transform:scaleX(0.955);transform-origin:0 0;'></div>
<div class='t' style='left:463.7px;top:539.31px;width:212.57px;overflow:hidden;font-size:10.3px;line-height:12px;color:#161616;transform:scaleX(0.955);transform-origin:0 0;'>Top Gun Soundtrack</div>
</div>
<div class='b' style='left:1181.5px;top:120px;width:12px;height:545.8px;background:#fafafa;border-left:1px solid #d8d8d8;'></div>
<div class='b' style='left:1183.7px;top:122px;width:7.6px;height:173px;background:#e4e4e4;border:1px solid #a4a4a4;border-radius:4px;'></div>
<div class='b' style='left:515.5px;top:665.8px;width:666px;height:12.4px;background:#f2f2f2;border-top:1px solid #a8a8a8;'></div>
<div class='b' style='left:517.3px;top:669.2px;width:71px;height:7.5px;background:#e2e2e2;border:1px solid #a4a4a4;border-radius:4px;'></div>
<div class='b' style='left:1181.6px;top:666.8px;width:11.7px;height:11.4px;background:#d4d4d4;'></div>
<div class='b' style='left:906px;top:686px;width:1px;height:13px;background:#a8a8a8;'></div>
<div class='b' style='left:907px;top:686px;width:1px;height:13px;background:#f0f0f0;'></div>
<div class='t' style='left:910.2px;top:688.45px;font-size:10.25px;line-height:12px;color:#333;font-weight:normal;font-style:normal;transform:scaleX(0.955);transform-origin:0 0;white-space:pre;'>100 tracks,   07:51:09,   565.06 MB</div>
<div class='b' style='left:1145.2px;top:685.8px;width:1px;height:13px;background:#9a9a9a;'></div>
<div class='b' style='left:1146.2px;top:685.8px;width:1px;height:13px;background:#f0f0f0;'></div>
<svg style='left:1148px;top:687px' width='16' height='14'><path d='M1.5 0.7 L2.4 0.7 L7.8 13.2 L1.5 13.2 Z' fill='#0000f0'/><path d='M13.6 0.7 L14 13.2 L8 13.2 Z' fill='#00e800'/></svg>
<div class='b' style='left:1164.2px;top:685.8px;width:1px;height:13px;background:#9a9a9a;'></div>
<div class='b' style='left:1165.2px;top:685.8px;width:1px;height:13px;background:#f0f0f0;'></div>
<div class='b' style='left:1170px;top:689.6px;width:11.8px;height:10.1px;background:linear-gradient(#a4a4a4,#8c8c8c);border-radius:1.8px;'></div>
<svg style='left:1170px;top:689.6px' width='12' height='10'><text x='0.8' y='8.2' font-family='Liberation Sans' font-weight='bold' font-size='9.5' fill='#fafafa' textLength='10.2' lengthAdjust='spacingAndGlyphs'>cs</text></svg>
<div class='b' style='left:1195px;top:691px;width:1px;height:1px;background:#b0b0b0;'></div>
<div class='b' style='left:1192px;top:694px;width:1px;height:1px;background:#b0b0b0;'></div>
<div class='b' style='left:1195px;top:694px;width:1px;height:1px;background:#b0b0b0;'></div>
<div class='b' style='left:1189px;top:697px;width:1px;height:1px;background:#b0b0b0;'></div>
<div class='b' style='left:1192px;top:697px;width:1px;height:1px;background:#b0b0b0;'></div>
<div class='b' style='left:1195px;top:697px;width:1px;height:1px;background:#b0b0b0;'></div>
</body></html>
